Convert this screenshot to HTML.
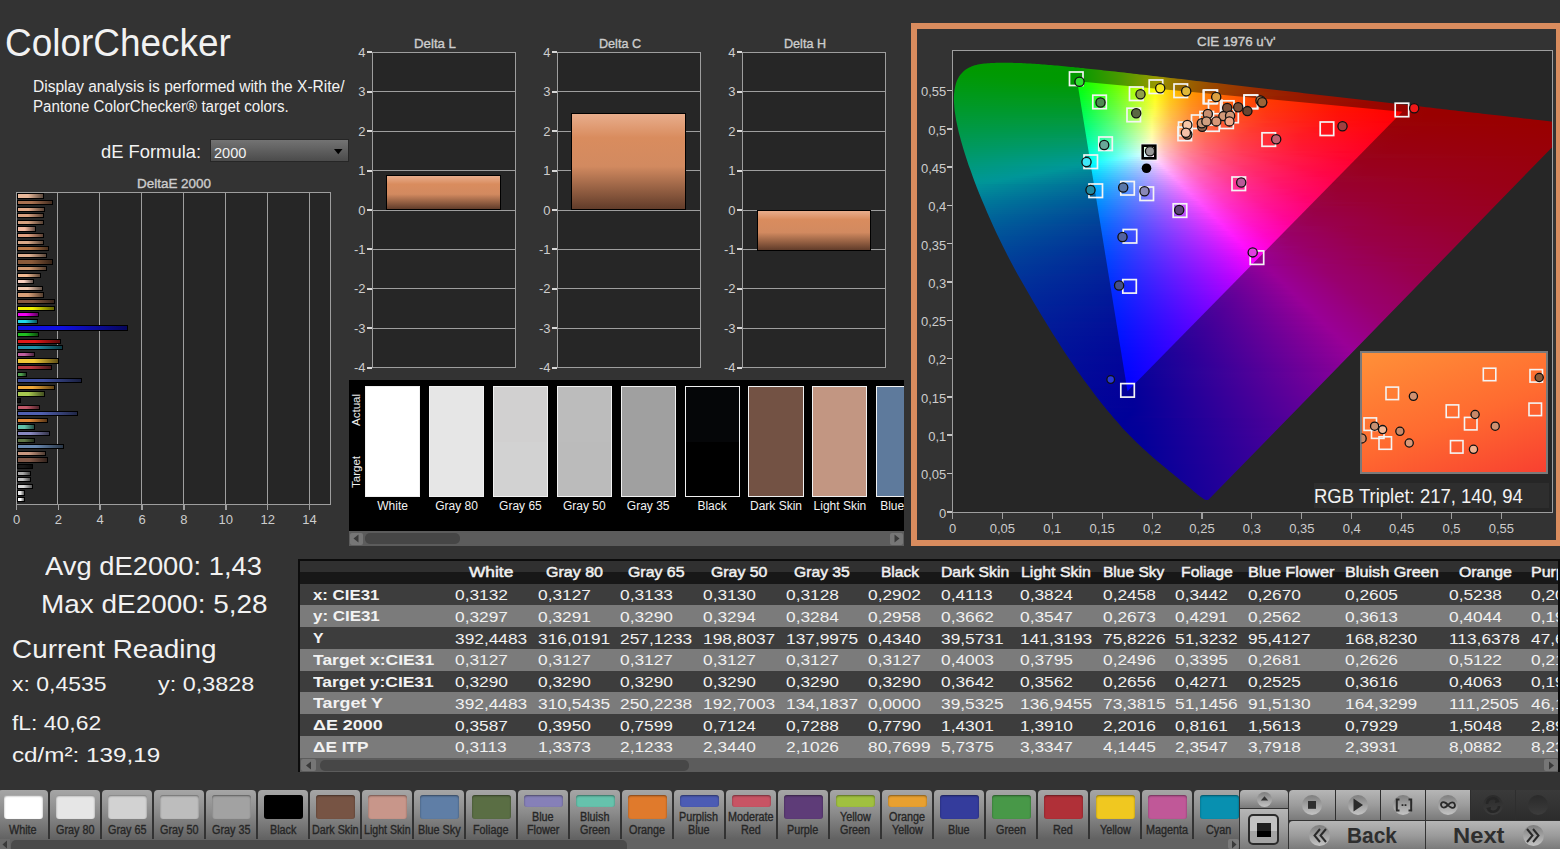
<!DOCTYPE html>
<html><head><meta charset="utf-8"><style>
html,body{margin:0;padding:0;}
body{width:1560px;height:849px;overflow:hidden;background:#333333;position:relative;font-family:"Liberation Sans",sans-serif;}
div,span,svg{position:absolute;}
span{white-space:nowrap;display:block;}
i{position:absolute;left:0;right:0;display:block;}
</style></head><body>
<span style="left:4.50px;top:23.29px;font-size:39px;line-height:39px;color:#f2f2f2;transform:scaleX(0.9476);transform-origin:0 0;">ColorChecker</span>
<span style="left:33.00px;top:79.46px;font-size:16px;line-height:16px;color:#f2f2f2;transform:scaleX(0.9703);transform-origin:0 0;">Display analysis is performed with the X-Rite/</span>
<span style="left:33.00px;top:99.46px;font-size:16px;line-height:16px;color:#f2f2f2;transform:scaleX(0.9454);transform-origin:0 0;">Pantone ColorChecker® target colors.</span>
<span style="left:101.00px;top:141.92px;font-size:19px;line-height:19px;color:#f2f2f2;transform:scaleX(0.9666);transform-origin:0 0;">dE Formula:</span>
<div style="left:209.50px;top:138.50px;width:139.00px;height:23.50px;background:linear-gradient(#737373,#4b4b4b);border:1px solid #262626;box-sizing:border-box;"></div>
<span style="left:213.80px;top:145.00px;font-size:15px;line-height:15px;color:#f2f2f2;transform:scaleX(0.9708);transform-origin:0 0;">2000</span>
<svg style="left:334px;top:149px" width="9" height="6"><path d="M0 0H8.5L4.25 5.2Z" fill="#000"/></svg>
<span style="left:137.00px;top:177.00px;font-size:13px;line-height:13px;color:#cdcdcd;transform:scaleX(1.0340);transform-origin:0 0;-webkit-text-stroke:0.35px #cdcdcd;">DeltaE 2000</span>
<div style="left:16.00px;top:192.00px;width:315.00px;height:313.00px;background:#262626;border:1px solid #9e9e9e;box-sizing:border-box;"></div>
<div style="left:57.36px;top:192.00px;width:1.00px;height:313.00px;background:#9e9e9e;"></div>
<div style="left:99.22px;top:192.00px;width:1.00px;height:313.00px;background:#9e9e9e;"></div>
<div style="left:141.08px;top:192.00px;width:1.00px;height:313.00px;background:#9e9e9e;"></div>
<div style="left:182.94px;top:192.00px;width:1.00px;height:313.00px;background:#9e9e9e;"></div>
<div style="left:224.80px;top:192.00px;width:1.00px;height:313.00px;background:#9e9e9e;"></div>
<div style="left:266.66px;top:192.00px;width:1.00px;height:313.00px;background:#9e9e9e;"></div>
<div style="left:308.52px;top:192.00px;width:1.00px;height:313.00px;background:#9e9e9e;"></div>
<div style="left:15.75px;top:505.00px;width:1.50px;height:5.00px;background:#9e9e9e;"></div>
<span style="left:12.89px;top:513.20px;font-size:13px;line-height:13px;color:#cdcdcd;">0</span>
<div style="left:57.61px;top:505.00px;width:1.50px;height:5.00px;background:#9e9e9e;"></div>
<span style="left:54.75px;top:513.20px;font-size:13px;line-height:13px;color:#cdcdcd;">2</span>
<div style="left:99.47px;top:505.00px;width:1.50px;height:5.00px;background:#9e9e9e;"></div>
<span style="left:96.61px;top:513.20px;font-size:13px;line-height:13px;color:#cdcdcd;">4</span>
<div style="left:141.33px;top:505.00px;width:1.50px;height:5.00px;background:#9e9e9e;"></div>
<span style="left:138.47px;top:513.20px;font-size:13px;line-height:13px;color:#cdcdcd;">6</span>
<div style="left:183.19px;top:505.00px;width:1.50px;height:5.00px;background:#9e9e9e;"></div>
<span style="left:180.33px;top:513.20px;font-size:13px;line-height:13px;color:#cdcdcd;">8</span>
<div style="left:225.05px;top:505.00px;width:1.50px;height:5.00px;background:#9e9e9e;"></div>
<span style="left:218.59px;top:513.20px;font-size:13px;line-height:13px;color:#cdcdcd;">10</span>
<div style="left:266.91px;top:505.00px;width:1.50px;height:5.00px;background:#9e9e9e;"></div>
<span style="left:260.44px;top:513.20px;font-size:13px;line-height:13px;color:#cdcdcd;">12</span>
<div style="left:308.77px;top:505.00px;width:1.50px;height:5.00px;background:#9e9e9e;"></div>
<span style="left:302.31px;top:513.20px;font-size:13px;line-height:13px;color:#cdcdcd;">14</span>
<div style="left:16.50px;top:193.40px;width:27.90px;height:5.20px;background:linear-gradient(90deg,#e8b89a,#e8b89a 40%,#000 140%);border:1px solid #000;box-sizing:border-box;"></div>
<div style="left:16.50px;top:200.00px;width:36.90px;height:5.20px;background:linear-gradient(90deg,#a87050,#a87050 40%,#000 140%);border:1px solid #000;box-sizing:border-box;"></div>
<div style="left:16.50px;top:206.60px;width:28.90px;height:5.20px;background:linear-gradient(90deg,#e0a888,#e0a888 40%,#000 140%);border:1px solid #000;box-sizing:border-box;"></div>
<div style="left:16.50px;top:213.20px;width:27.00px;height:5.20px;background:linear-gradient(90deg,#d8a080,#d8a080 40%,#000 140%);border:1px solid #000;box-sizing:border-box;"></div>
<div style="left:16.50px;top:219.80px;width:27.90px;height:5.20px;background:linear-gradient(90deg,#d4a080,#d4a080 40%,#000 140%);border:1px solid #000;box-sizing:border-box;"></div>
<div style="left:16.50px;top:226.40px;width:19.90px;height:5.20px;background:linear-gradient(90deg,#f0b8a0,#f0b8a0 40%,#000 140%);border:1px solid #000;box-sizing:border-box;"></div>
<div style="left:16.50px;top:233.00px;width:27.00px;height:5.20px;background:linear-gradient(90deg,#e0a080,#e0a080 40%,#000 140%);border:1px solid #000;box-sizing:border-box;"></div>
<div style="left:16.50px;top:239.60px;width:27.90px;height:5.20px;background:linear-gradient(90deg,#d8a888,#d8a888 40%,#000 140%);border:1px solid #000;box-sizing:border-box;"></div>
<div style="left:16.50px;top:246.20px;width:32.60px;height:5.20px;background:linear-gradient(90deg,#b87848,#b87848 40%,#000 140%);border:1px solid #000;box-sizing:border-box;"></div>
<div style="left:16.50px;top:252.80px;width:30.80px;height:5.20px;background:linear-gradient(90deg,#e0b090,#e0b090 40%,#000 140%);border:1px solid #000;box-sizing:border-box;"></div>
<div style="left:16.50px;top:259.40px;width:36.90px;height:5.20px;background:linear-gradient(90deg,#8a5a3a,#8a5a3a 40%,#000 140%);border:1px solid #000;box-sizing:border-box;"></div>
<div style="left:16.50px;top:266.00px;width:30.70px;height:5.20px;background:linear-gradient(90deg,#d09870,#d09870 40%,#000 140%);border:1px solid #000;box-sizing:border-box;"></div>
<div style="left:16.50px;top:272.60px;width:24.60px;height:5.20px;background:linear-gradient(90deg,#f0b890,#f0b890 40%,#000 140%);border:1px solid #000;box-sizing:border-box;"></div>
<div style="left:16.50px;top:279.20px;width:17.40px;height:5.20px;background:linear-gradient(90deg,#f8d0c0,#f8d0c0 40%,#000 140%);border:1px solid #000;box-sizing:border-box;"></div>
<div style="left:16.50px;top:285.80px;width:26.50px;height:5.20px;background:linear-gradient(90deg,#f0c8b0,#f0c8b0 40%,#000 140%);border:1px solid #000;box-sizing:border-box;"></div>
<div style="left:16.50px;top:292.40px;width:27.90px;height:5.20px;background:linear-gradient(90deg,#d8a078,#d8a078 40%,#000 140%);border:1px solid #000;box-sizing:border-box;"></div>
<div style="left:16.50px;top:299.00px;width:38.00px;height:5.20px;background:linear-gradient(90deg,#8a5a40,#8a5a40 40%,#000 140%);border:1px solid #000;box-sizing:border-box;"></div>
<div style="left:16.50px;top:305.60px;width:38.70px;height:5.20px;background:linear-gradient(90deg,#f0f000,#f0f000 40%,#000 140%);border:1px solid #000;box-sizing:border-box;"></div>
<div style="left:16.50px;top:312.20px;width:22.70px;height:5.20px;background:linear-gradient(90deg,#f000f0,#f000f0 40%,#000 140%);border:1px solid #000;box-sizing:border-box;"></div>
<div style="left:16.50px;top:318.80px;width:21.80px;height:5.20px;background:linear-gradient(90deg,#20d8e8,#20d8e8 40%,#000 140%);border:1px solid #000;box-sizing:border-box;"></div>
<div style="left:16.50px;top:325.40px;width:111.00px;height:5.20px;background:linear-gradient(90deg,#1010e0,#1010e0 40%,#000 140%);border:1px solid #000;box-sizing:border-box;"></div>
<div style="left:16.50px;top:332.00px;width:22.70px;height:5.20px;background:linear-gradient(90deg,#20c020,#20c020 40%,#000 140%);border:1px solid #000;box-sizing:border-box;"></div>
<div style="left:16.50px;top:338.60px;width:44.70px;height:5.20px;background:linear-gradient(90deg,#e01818,#e01818 40%,#000 140%);border:1px solid #000;box-sizing:border-box;"></div>
<div style="left:16.50px;top:345.20px;width:46.00px;height:5.20px;background:linear-gradient(90deg,#2090a8,#2090a8 40%,#000 140%);border:1px solid #000;box-sizing:border-box;"></div>
<div style="left:16.50px;top:351.80px;width:18.00px;height:5.20px;background:linear-gradient(90deg,#c060a0,#c060a0 40%,#000 140%);border:1px solid #000;box-sizing:border-box;"></div>
<div style="left:16.50px;top:358.40px;width:42.20px;height:5.20px;background:linear-gradient(90deg,#f0c838,#f0c838 40%,#000 140%);border:1px solid #000;box-sizing:border-box;"></div>
<div style="left:16.50px;top:365.00px;width:35.90px;height:5.20px;background:linear-gradient(90deg,#b83840,#b83840 40%,#000 140%);border:1px solid #000;box-sizing:border-box;"></div>
<div style="left:16.50px;top:371.60px;width:10.20px;height:5.20px;background:linear-gradient(90deg,#50a050,#50a050 40%,#000 140%);border:1px solid #000;box-sizing:border-box;"></div>
<div style="left:16.50px;top:378.20px;width:65.00px;height:5.20px;background:linear-gradient(90deg,#4050a0,#4050a0 40%,#000 140%);border:1px solid #000;box-sizing:border-box;"></div>
<div style="left:16.50px;top:384.80px;width:38.20px;height:5.20px;background:linear-gradient(90deg,#f0a838,#f0a838 40%,#000 140%);border:1px solid #000;box-sizing:border-box;"></div>
<div style="left:16.50px;top:391.40px;width:28.10px;height:5.20px;background:linear-gradient(90deg,#a8c850,#a8c850 40%,#000 140%);border:1px solid #000;box-sizing:border-box;"></div>
<div style="left:16.50px;top:398.00px;width:4.20px;height:5.20px;background:linear-gradient(90deg,#101010,#101010 40%,#000 140%);border:1px solid #000;box-sizing:border-box;"></div>
<div style="left:16.50px;top:404.60px;width:23.00px;height:5.20px;background:linear-gradient(90deg,#c05868,#c05868 40%,#000 140%);border:1px solid #000;box-sizing:border-box;"></div>
<div style="left:16.50px;top:411.20px;width:61.20px;height:5.20px;background:linear-gradient(90deg,#5060b0,#5060b0 40%,#000 140%);border:1px solid #000;box-sizing:border-box;"></div>
<div style="left:16.50px;top:417.80px;width:31.90px;height:5.20px;background:linear-gradient(90deg,#e08838,#e08838 40%,#000 140%);border:1px solid #000;box-sizing:border-box;"></div>
<div style="left:16.50px;top:424.40px;width:18.00px;height:5.20px;background:linear-gradient(90deg,#60c0a8,#60c0a8 40%,#000 140%);border:1px solid #000;box-sizing:border-box;"></div>
<div style="left:16.50px;top:431.00px;width:33.00px;height:5.20px;background:linear-gradient(90deg,#8888c0,#8888c0 40%,#000 140%);border:1px solid #000;box-sizing:border-box;"></div>
<div style="left:16.50px;top:437.60px;width:18.00px;height:5.20px;background:linear-gradient(90deg,#607848,#607848 40%,#000 140%);border:1px solid #000;box-sizing:border-box;"></div>
<div style="left:16.50px;top:444.20px;width:47.10px;height:5.20px;background:linear-gradient(90deg,#6888b0,#6888b0 40%,#000 140%);border:1px solid #000;box-sizing:border-box;"></div>
<div style="left:16.50px;top:450.80px;width:29.20px;height:5.20px;background:linear-gradient(90deg,#c89880,#c89880 40%,#000 140%);border:1px solid #000;box-sizing:border-box;"></div>
<div style="left:16.50px;top:457.40px;width:31.00px;height:5.20px;background:linear-gradient(90deg,#805848,#805848 40%,#000 140%);border:1px solid #000;box-sizing:border-box;"></div>
<div style="left:16.50px;top:464.00px;width:16.30px;height:5.20px;background:linear-gradient(90deg,#181818,#181818 40%,#000 140%);border:1px solid #000;box-sizing:border-box;"></div>
<div style="left:16.50px;top:470.60px;width:14.90px;height:5.20px;background:linear-gradient(90deg,#a8a8a8,#a8a8a8 40%,#000 140%);border:1px solid #000;box-sizing:border-box;"></div>
<div style="left:16.50px;top:477.20px;width:14.90px;height:5.20px;background:linear-gradient(90deg,#c0c0c0,#c0c0c0 40%,#000 140%);border:1px solid #000;box-sizing:border-box;"></div>
<div style="left:16.50px;top:483.80px;width:16.30px;height:5.20px;background:linear-gradient(90deg,#d8d8d8,#d8d8d8 40%,#000 140%);border:1px solid #000;box-sizing:border-box;"></div>
<div style="left:16.50px;top:490.40px;width:8.70px;height:5.20px;background:linear-gradient(90deg,#e8e8e8,#e8e8e8 40%,#000 140%);border:1px solid #000;box-sizing:border-box;"></div>
<div style="left:16.50px;top:497.00px;width:8.00px;height:5.20px;background:linear-gradient(90deg,#ffffff,#ffffff 40%,#000 140%);border:1px solid #000;box-sizing:border-box;"></div>
<div style="left:372.00px;top:51.70px;width:144.00px;height:316.30px;background:#262626;border:1px solid #9e9e9e;box-sizing:border-box;"></div>
<div style="left:372.00px;top:327.82px;width:144.00px;height:1.00px;background:#9e9e9e;"></div>
<div style="left:372.00px;top:288.38px;width:144.00px;height:1.00px;background:#9e9e9e;"></div>
<div style="left:372.00px;top:248.94px;width:144.00px;height:1.00px;background:#9e9e9e;"></div>
<div style="left:372.00px;top:209.50px;width:144.00px;height:1.00px;background:#9e9e9e;"></div>
<div style="left:372.00px;top:170.06px;width:144.00px;height:1.00px;background:#9e9e9e;"></div>
<div style="left:372.00px;top:130.62px;width:144.00px;height:1.00px;background:#9e9e9e;"></div>
<div style="left:372.00px;top:91.18px;width:144.00px;height:1.00px;background:#9e9e9e;"></div>
<div style="left:366.50px;top:366.76px;width:5.50px;height:2.00px;background:#d8d8d8;"></div>
<span style="left:353.93px;top:361.36px;font-size:13px;line-height:13px;color:#cdcdcd;">-4</span>
<div style="left:366.50px;top:327.32px;width:5.50px;height:2.00px;background:#d8d8d8;"></div>
<span style="left:353.93px;top:321.92px;font-size:13px;line-height:13px;color:#cdcdcd;">-3</span>
<div style="left:366.50px;top:287.88px;width:5.50px;height:2.00px;background:#d8d8d8;"></div>
<span style="left:353.93px;top:282.48px;font-size:13px;line-height:13px;color:#cdcdcd;">-2</span>
<div style="left:366.50px;top:248.44px;width:5.50px;height:2.00px;background:#d8d8d8;"></div>
<span style="left:353.93px;top:243.04px;font-size:13px;line-height:13px;color:#cdcdcd;">-1</span>
<div style="left:366.50px;top:209.00px;width:5.50px;height:2.00px;background:#d8d8d8;"></div>
<span style="left:358.29px;top:203.60px;font-size:13px;line-height:13px;color:#cdcdcd;">0</span>
<div style="left:366.50px;top:169.56px;width:5.50px;height:2.00px;background:#d8d8d8;"></div>
<span style="left:358.29px;top:164.16px;font-size:13px;line-height:13px;color:#cdcdcd;">1</span>
<div style="left:366.50px;top:130.12px;width:5.50px;height:2.00px;background:#d8d8d8;"></div>
<span style="left:358.29px;top:124.72px;font-size:13px;line-height:13px;color:#cdcdcd;">2</span>
<div style="left:366.50px;top:90.68px;width:5.50px;height:2.00px;background:#d8d8d8;"></div>
<span style="left:358.29px;top:85.28px;font-size:13px;line-height:13px;color:#cdcdcd;">3</span>
<div style="left:366.50px;top:51.24px;width:5.50px;height:2.00px;background:#d8d8d8;"></div>
<span style="left:358.29px;top:45.84px;font-size:13px;line-height:13px;color:#cdcdcd;">4</span>
<span style="left:414.00px;top:37.00px;font-size:13px;line-height:13px;color:#cdcdcd;transform:scaleX(1.0192);transform-origin:0 0;-webkit-text-stroke:0.35px #cdcdcd;">Delta L</span>
<div style="left:386.00px;top:174.50px;width:114.50px;height:35.50px;background:linear-gradient(#e8ad8c,#d98c5e 25%,#d28a60 55%,#613c2a);border:1px solid #000;box-sizing:border-box;"></div>
<div style="left:557.00px;top:51.70px;width:144.00px;height:316.30px;background:#262626;border:1px solid #9e9e9e;box-sizing:border-box;"></div>
<div style="left:557.00px;top:327.82px;width:144.00px;height:1.00px;background:#9e9e9e;"></div>
<div style="left:557.00px;top:288.38px;width:144.00px;height:1.00px;background:#9e9e9e;"></div>
<div style="left:557.00px;top:248.94px;width:144.00px;height:1.00px;background:#9e9e9e;"></div>
<div style="left:557.00px;top:209.50px;width:144.00px;height:1.00px;background:#9e9e9e;"></div>
<div style="left:557.00px;top:170.06px;width:144.00px;height:1.00px;background:#9e9e9e;"></div>
<div style="left:557.00px;top:130.62px;width:144.00px;height:1.00px;background:#9e9e9e;"></div>
<div style="left:557.00px;top:91.18px;width:144.00px;height:1.00px;background:#9e9e9e;"></div>
<div style="left:551.50px;top:366.76px;width:5.50px;height:2.00px;background:#d8d8d8;"></div>
<span style="left:538.93px;top:361.36px;font-size:13px;line-height:13px;color:#cdcdcd;">-4</span>
<div style="left:551.50px;top:327.32px;width:5.50px;height:2.00px;background:#d8d8d8;"></div>
<span style="left:538.93px;top:321.92px;font-size:13px;line-height:13px;color:#cdcdcd;">-3</span>
<div style="left:551.50px;top:287.88px;width:5.50px;height:2.00px;background:#d8d8d8;"></div>
<span style="left:538.93px;top:282.48px;font-size:13px;line-height:13px;color:#cdcdcd;">-2</span>
<div style="left:551.50px;top:248.44px;width:5.50px;height:2.00px;background:#d8d8d8;"></div>
<span style="left:538.93px;top:243.04px;font-size:13px;line-height:13px;color:#cdcdcd;">-1</span>
<div style="left:551.50px;top:209.00px;width:5.50px;height:2.00px;background:#d8d8d8;"></div>
<span style="left:543.28px;top:203.60px;font-size:13px;line-height:13px;color:#cdcdcd;">0</span>
<div style="left:551.50px;top:169.56px;width:5.50px;height:2.00px;background:#d8d8d8;"></div>
<span style="left:543.28px;top:164.16px;font-size:13px;line-height:13px;color:#cdcdcd;">1</span>
<div style="left:551.50px;top:130.12px;width:5.50px;height:2.00px;background:#d8d8d8;"></div>
<span style="left:543.28px;top:124.72px;font-size:13px;line-height:13px;color:#cdcdcd;">2</span>
<div style="left:551.50px;top:90.68px;width:5.50px;height:2.00px;background:#d8d8d8;"></div>
<span style="left:543.28px;top:85.28px;font-size:13px;line-height:13px;color:#cdcdcd;">3</span>
<div style="left:551.50px;top:51.24px;width:5.50px;height:2.00px;background:#d8d8d8;"></div>
<span style="left:543.28px;top:45.84px;font-size:13px;line-height:13px;color:#cdcdcd;">4</span>
<span style="left:599.20px;top:37.00px;font-size:13px;line-height:13px;color:#cdcdcd;transform:scaleX(0.9687);transform-origin:0 0;-webkit-text-stroke:0.35px #cdcdcd;">Delta C</span>
<div style="left:571.00px;top:113.37px;width:115.00px;height:96.63px;background:linear-gradient(#e8ad8c,#d98c5e 25%,#d28a60 55%,#613c2a);border:1px solid #000;box-sizing:border-box;"></div>
<div style="left:742.00px;top:51.70px;width:144.00px;height:316.30px;background:#262626;border:1px solid #9e9e9e;box-sizing:border-box;"></div>
<div style="left:742.00px;top:327.82px;width:144.00px;height:1.00px;background:#9e9e9e;"></div>
<div style="left:742.00px;top:288.38px;width:144.00px;height:1.00px;background:#9e9e9e;"></div>
<div style="left:742.00px;top:248.94px;width:144.00px;height:1.00px;background:#9e9e9e;"></div>
<div style="left:742.00px;top:209.50px;width:144.00px;height:1.00px;background:#9e9e9e;"></div>
<div style="left:742.00px;top:170.06px;width:144.00px;height:1.00px;background:#9e9e9e;"></div>
<div style="left:742.00px;top:130.62px;width:144.00px;height:1.00px;background:#9e9e9e;"></div>
<div style="left:742.00px;top:91.18px;width:144.00px;height:1.00px;background:#9e9e9e;"></div>
<div style="left:736.50px;top:366.76px;width:5.50px;height:2.00px;background:#d8d8d8;"></div>
<span style="left:723.93px;top:361.36px;font-size:13px;line-height:13px;color:#cdcdcd;">-4</span>
<div style="left:736.50px;top:327.32px;width:5.50px;height:2.00px;background:#d8d8d8;"></div>
<span style="left:723.93px;top:321.92px;font-size:13px;line-height:13px;color:#cdcdcd;">-3</span>
<div style="left:736.50px;top:287.88px;width:5.50px;height:2.00px;background:#d8d8d8;"></div>
<span style="left:723.93px;top:282.48px;font-size:13px;line-height:13px;color:#cdcdcd;">-2</span>
<div style="left:736.50px;top:248.44px;width:5.50px;height:2.00px;background:#d8d8d8;"></div>
<span style="left:723.93px;top:243.04px;font-size:13px;line-height:13px;color:#cdcdcd;">-1</span>
<div style="left:736.50px;top:209.00px;width:5.50px;height:2.00px;background:#d8d8d8;"></div>
<span style="left:728.28px;top:203.60px;font-size:13px;line-height:13px;color:#cdcdcd;">0</span>
<div style="left:736.50px;top:169.56px;width:5.50px;height:2.00px;background:#d8d8d8;"></div>
<span style="left:728.28px;top:164.16px;font-size:13px;line-height:13px;color:#cdcdcd;">1</span>
<div style="left:736.50px;top:130.12px;width:5.50px;height:2.00px;background:#d8d8d8;"></div>
<span style="left:728.28px;top:124.72px;font-size:13px;line-height:13px;color:#cdcdcd;">2</span>
<div style="left:736.50px;top:90.68px;width:5.50px;height:2.00px;background:#d8d8d8;"></div>
<span style="left:728.28px;top:85.28px;font-size:13px;line-height:13px;color:#cdcdcd;">3</span>
<div style="left:736.50px;top:51.24px;width:5.50px;height:2.00px;background:#d8d8d8;"></div>
<span style="left:728.28px;top:45.84px;font-size:13px;line-height:13px;color:#cdcdcd;">4</span>
<span style="left:784.40px;top:37.00px;font-size:13px;line-height:13px;color:#cdcdcd;transform:scaleX(0.9687);transform-origin:0 0;-webkit-text-stroke:0.35px #cdcdcd;">Delta H</span>
<div style="left:756.50px;top:210.00px;width:114.00px;height:41.41px;background:linear-gradient(#e8ad8c,#d98c5e 22%,#d28a60 55%,#613c2a);border:1px solid #000;box-sizing:border-box;"></div>
<div style="left:349.00px;top:380.00px;width:555.00px;height:151.00px;background:#000;"></div>
<div style="left:365.00px;top:386.00px;width:55.20px;height:111.00px;background:linear-gradient(#ffffff 50%,#ffffff 50%);border:1px solid #f0f0f0;box-sizing:border-box;"></div>
<span style="left:377.27px;top:499.84px;font-size:12px;line-height:12px;color:#f2f2f2;">White</span>
<div style="left:428.90px;top:386.00px;width:55.20px;height:111.00px;background:linear-gradient(#e6e6e6 50%,#e6e6e6 50%);border:1px solid #f0f0f0;box-sizing:border-box;"></div>
<span style="left:435.17px;top:499.84px;font-size:12px;line-height:12px;color:#f2f2f2;">Gray 80</span>
<div style="left:492.80px;top:386.00px;width:55.20px;height:111.00px;background:linear-gradient(#d1d0d0 50%,#d2d2d2 50%);border:1px solid #f0f0f0;box-sizing:border-box;"></div>
<span style="left:499.07px;top:499.84px;font-size:12px;line-height:12px;color:#f2f2f2;">Gray 65</span>
<div style="left:556.70px;top:386.00px;width:55.20px;height:111.00px;background:linear-gradient(#bcbcbc 50%,#bbbbbb 50%);border:1px solid #f0f0f0;box-sizing:border-box;"></div>
<span style="left:562.97px;top:499.84px;font-size:12px;line-height:12px;color:#f2f2f2;">Gray 50</span>
<div style="left:620.60px;top:386.00px;width:55.20px;height:111.00px;background:linear-gradient(#a0a0a0 50%,#a0a0a0 50%);border:1px solid #f0f0f0;box-sizing:border-box;"></div>
<span style="left:626.87px;top:499.84px;font-size:12px;line-height:12px;color:#f2f2f2;">Gray 35</span>
<div style="left:684.50px;top:386.00px;width:55.20px;height:111.00px;background:linear-gradient(#050608 50%,#000000 50%);border:1px solid #f0f0f0;box-sizing:border-box;"></div>
<span style="left:697.40px;top:499.84px;font-size:12px;line-height:12px;color:#f2f2f2;">Black</span>
<div style="left:748.40px;top:386.00px;width:55.20px;height:111.00px;background:linear-gradient(#735244 50%,#735244 50%);border:1px solid #f0f0f0;box-sizing:border-box;"></div>
<span style="left:749.99px;top:499.84px;font-size:12px;line-height:12px;color:#f2f2f2;">Dark Skin</span>
<div style="left:812.30px;top:386.00px;width:55.20px;height:111.00px;background:linear-gradient(#c29682 50%,#c29682 50%);border:1px solid #f0f0f0;box-sizing:border-box;"></div>
<span style="left:813.56px;top:499.84px;font-size:12px;line-height:12px;color:#f2f2f2;">Light Skin</span>
<div style="left:876.20px;top:386.00px;width:27.80px;height:111.00px;background:linear-gradient(#5e7a9c 50%,#5e7a9c 50%);border:1px solid #f0f0f0;border-right:none;box-sizing:border-box;"></div>
<span style="left:880.20px;top:499.84px;font-size:12px;line-height:12px;color:#f2f2f2;">Blue</span>
<span style="left:340.21px;top:404.30px;font-size:11.5px;line-height:12px;color:#f0f0f0;transform:rotate(-90deg) scaleX(1.007);transform-origin:15.98px 6px;">Actual</span>
<span style="left:340.21px;top:466.30px;font-size:11.5px;line-height:12px;color:#f0f0f0;transform:rotate(-90deg) scaleX(1.001);transform-origin:15.98px 6px;">Target</span>
<div style="left:349.00px;top:531.00px;width:555.00px;height:14.50px;background:#5c5c5c;"></div>
<div style="left:350.00px;top:532.50px;width:13.00px;height:12.00px;background:#767676;border-radius:2px;"></div>
<svg style="left:352px;top:534px" width="8" height="9"><path d="M6.5 0.5V8.5L1.5 4.5Z" fill="#3a3a3a"/></svg>
<div style="left:365.00px;top:533.00px;width:95.00px;height:11.00px;background:#464646;border-radius:5px;"></div>
<div style="left:890.00px;top:532.50px;width:13.00px;height:12.00px;background:#767676;border-radius:2px;"></div>
<svg style="left:893px;top:534px" width="8" height="9"><path d="M1.5 0.5V8.5L6.5 4.5Z" fill="#3a3a3a"/></svg>
<span style="left:45.30px;top:553.19px;font-size:26px;line-height:26px;color:#f2f2f2;transform:scaleX(1.0518);transform-origin:0 0;">Avg dE2000: 1,43</span>
<span style="left:41.20px;top:591.19px;font-size:26px;line-height:26px;color:#f2f2f2;transform:scaleX(1.0740);transform-origin:0 0;">Max dE2000: 5,28</span>
<span style="left:11.70px;top:637.24px;font-size:25px;line-height:25px;color:#f2f2f2;transform:scaleX(1.1150);transform-origin:0 0;">Current Reading</span>
<span style="left:11.70px;top:672.62px;font-size:21px;line-height:21px;color:#f2f2f2;transform:scaleX(1.0936);transform-origin:0 0;">x: 0,4535</span>
<span style="left:158.00px;top:672.62px;font-size:21px;line-height:21px;color:#f2f2f2;transform:scaleX(1.1132);transform-origin:0 0;">y: 0,3828</span>
<span style="left:11.70px;top:711.92px;font-size:21px;line-height:21px;color:#f2f2f2;transform:scaleX(1.0907);transform-origin:0 0;">fL: 40,62</span>
<span style="left:11.70px;top:744.42px;font-size:21px;line-height:21px;color:#f2f2f2;transform:scaleX(1.1541);transform-origin:0 0;">cd/m²: 139,19</span>
<div style="left:911.00px;top:23.00px;width:649.00px;height:523.00px;border:6px solid #d98c5e;border-right:none;box-sizing:border-box;"></div>
<div style="left:1555.50px;top:23.00px;width:4.50px;height:523.00px;background:#d98c5e;"></div>
<span style="left:1196.95px;top:35.25px;font-size:13px;line-height:13px;color:#cdcdcd;transform:scaleX(1.0261);transform-origin:0 0;-webkit-text-stroke:0.35px #cdcdcd;">CIE 1976 u'v'</span>
<div style="left:952.00px;top:50.00px;width:601.00px;height:463.00px;background:#262626;border:1px solid #9e9e9e;box-sizing:border-box;"></div>
<div style="left:953px;top:62px;width:599px;height:450px;overflow:hidden;clip-path:polygon(249.3px 444.1px,236.5px 457.3px,230.7px 463.2px,232.1px 461.8px,236.3px 457.4px,243.4px 450.1px,249.1px 444.3px,253.3px 439.9px,255.4px 437.8px,255.3px 437.8px,255.2px 437.8px,255.1px 437.9px,255.0px 437.9px,255.0px 437.9px,254.9px 438.0px,254.7px 438.0px,254.6px 438.0px,254.5px 438.0px,254.4px 438.0px,254.3px 438.1px,254.1px 438.1px,254.0px 438.1px,253.8px 438.0px,253.6px 438.0px,253.4px 438.0px,253.2px 438.0px,253.0px 437.9px,252.8px 437.9px,252.5px 437.9px,252.2px 437.8px,251.9px 437.6px,251.4px 437.4px,250.9px 437.1px,250.4px 436.7px,249.7px 436.3px,249.1px 435.8px,248.3px 435.3px,247.5px 434.7px,246.6px 434.0px,245.6px 433.3px,244.5px 432.4px,243.2px 431.3px,241.8px 430.2px,240.3px 428.9px,238.8px 427.6px,237.2px 426.3px,235.8px 425.1px,234.4px 424.0px,233.2px 422.9px,232.1px 422.0px,231.1px 421.2px,230.1px 420.4px,229.2px 419.6px,228.2px 418.9px,227.3px 418.0px,226.2px 417.2px,225.1px 416.2px,223.9px 415.3px,222.6px 414.2px,221.3px 413.2px,220.0px 412.1px,218.7px 411.0px,217.3px 409.9px,215.8px 408.7px,214.4px 407.5px,212.9px 406.3px,211.4px 405.0px,209.9px 403.8px,208.3px 402.5px,206.7px 401.1px,205.0px 399.7px,203.3px 398.2px,201.5px 396.7px,199.7px 395.2px,197.9px 393.5px,196.0px 391.9px,194.0px 390.1px,192.0px 388.3px,190.0px 386.4px,187.9px 384.5px,185.8px 382.4px,183.6px 380.4px,181.4px 378.2px,179.2px 376.0px,176.9px 373.7px,174.5px 371.3px,172.0px 368.7px,169.4px 365.9px,166.7px 362.8px,163.9px 359.6px,160.9px 356.2px,157.9px 352.6px,154.8px 348.9px,151.6px 345.0px,148.3px 340.9px,145.0px 336.7px,141.5px 332.2px,138.1px 327.6px,134.5px 322.8px,130.9px 317.9px,127.2px 312.8px,123.4px 307.5px,119.7px 302.0px,115.9px 296.4px,112.0px 290.7px,108.1px 284.7px,104.2px 278.6px,100.1px 272.2px,96.1px 265.8px,92.1px 259.3px,88.1px 252.7px,84.1px 246.1px,80.2px 239.4px,76.2px 232.6px,72.3px 225.8px,68.3px 218.8px,64.4px 211.9px,60.6px 204.9px,56.9px 198.0px,53.3px 191.1px,49.9px 184.3px,46.6px 177.5px,43.3px 170.8px,40.2px 164.0px,37.2px 157.3px,34.3px 150.7px,31.6px 144.3px,28.9px 138.0px,26.4px 131.9px,24.0px 125.9px,21.7px 120.0px,19.6px 114.2px,17.6px 108.6px,15.6px 103.2px,13.9px 97.9px,12.2px 92.8px,10.7px 88.0px,9.3px 83.3px,8.0px 78.8px,6.9px 74.5px,5.8px 70.4px,4.9px 66.5px,4.1px 62.7px,3.3px 59.0px,2.7px 55.5px,2.2px 52.2px,1.7px 49.1px,1.4px 46.1px,1.2px 43.2px,1.0px 40.5px,0.9px 37.9px,0.9px 35.4px,1.0px 33.0px,1.2px 30.7px,1.4px 28.5px,1.8px 26.4px,2.2px 24.5px,2.7px 22.6px,3.2px 20.8px,3.8px 19.1px,4.5px 17.5px,5.3px 16.0px,6.1px 14.6px,7.0px 13.3px,8.0px 12.0px,9.0px 10.9px,10.1px 9.8px,11.2px 8.7px,12.4px 7.8px,13.6px 7.0px,14.9px 6.2px,16.2px 5.5px,17.5px 4.9px,18.9px 4.3px,20.4px 3.8px,21.8px 3.3px,23.3px 2.9px,24.9px 2.6px,26.4px 2.3px,28.0px 2.0px,29.6px 1.8px,31.3px 1.6px,32.9px 1.4px,34.6px 1.3px,36.3px 1.2px,38.0px 1.0px,39.7px 0.9px,41.5px 0.9px,43.2px 0.8px,45.0px 0.8px,46.8px 0.8px,48.6px 0.8px,50.3px 0.7px,52.1px 0.7px,53.9px 0.7px,55.6px 0.8px,57.4px 0.8px,59.2px 0.8px,61.0px 0.9px,62.8px 0.9px,64.6px 1.0px,66.4px 1.0px,68.3px 1.1px,70.1px 1.2px,72.0px 1.3px,73.8px 1.4px,75.7px 1.5px,77.6px 1.6px,79.5px 1.7px,81.5px 1.8px,83.4px 1.9px,85.4px 2.1px,87.4px 2.2px,89.4px 2.4px,91.5px 2.5px,93.5px 2.7px,95.6px 2.9px,97.7px 3.0px,99.9px 3.2px,102.0px 3.4px,104.2px 3.6px,106.4px 3.8px,108.6px 4.0px,110.9px 4.2px,113.1px 4.4px,115.4px 4.7px,117.8px 4.9px,120.1px 5.1px,122.5px 5.4px,124.9px 5.6px,127.4px 5.9px,129.9px 6.1px,132.4px 6.4px,134.9px 6.7px,137.5px 6.9px,140.1px 7.2px,142.8px 7.5px,145.4px 7.8px,148.2px 8.1px,150.9px 8.4px,153.7px 8.7px,156.5px 9.0px,159.4px 9.3px,162.3px 9.6px,165.2px 10.0px,168.2px 10.3px,171.2px 10.6px,174.2px 11.0px,177.3px 11.3px,180.4px 11.7px,183.6px 12.0px,186.8px 12.4px,190.0px 12.7px,193.3px 13.1px,196.6px 13.5px,200.0px 13.9px,203.4px 14.3px,206.9px 14.7px,210.3px 15.1px,213.9px 15.5px,217.4px 15.9px,221.0px 16.3px,224.7px 16.7px,228.4px 17.1px,232.1px 17.5px,235.9px 18.0px,239.7px 18.4px,243.5px 18.9px,247.4px 19.3px,251.3px 19.8px,255.3px 20.2px,259.3px 20.7px,263.4px 21.1px,267.4px 21.6px,271.6px 22.1px,275.7px 22.6px,279.9px 23.0px,284.2px 23.5px,288.4px 24.0px,292.7px 24.5px,297.0px 25.0px,301.4px 25.5px,305.8px 26.0px,310.2px 26.5px,314.7px 27.0px,319.1px 27.5px,323.6px 28.0px,328.1px 28.6px,332.6px 29.1px,337.2px 29.6px,341.7px 30.1px,346.3px 30.6px,350.9px 31.2px,355.5px 31.7px,360.0px 32.2px,364.6px 32.8px,369.1px 33.3px,373.5px 33.8px,378.0px 34.3px,382.4px 34.8px,386.8px 35.3px,391.2px 35.8px,395.6px 36.3px,400.0px 36.8px,404.4px 37.3px,408.7px 37.8px,413.1px 38.3px,417.4px 38.8px,421.8px 39.3px,426.1px 39.8px,430.3px 40.3px,434.5px 40.8px,438.6px 41.2px,442.6px 41.7px,446.6px 42.2px,450.6px 42.6px,454.5px 43.1px,458.3px 43.5px,462.1px 43.9px,465.9px 44.3px,469.5px 44.8px,473.2px 45.2px,476.7px 45.6px,480.2px 46.0px,483.7px 46.4px,487.1px 46.8px,490.4px 47.2px,493.6px 47.5px,496.7px 47.9px,499.7px 48.2px,502.5px 48.6px,505.1px 48.9px,507.9px 49.2px,510.7px 49.5px,513.7px 49.9px,517.1px 50.2px,520.8px 50.7px,525.0px 51.1px,529.5px 51.7px,534.2px 52.2px,539.0px 52.8px,543.8px 53.3px,548.4px 53.8px,552.7px 54.3px,556.8px 54.8px,560.5px 55.2px,564.1px 55.6px,567.6px 56.0px,570.9px 56.4px,574.0px 56.8px,577.1px 57.1px,579.9px 57.5px,582.7px 57.8px,585.2px 58.1px,587.7px 58.3px,589.9px 58.6px,592.1px 58.8px,594.1px 59.1px,596.1px 59.3px,597.9px 59.5px,599.6px 59.7px,601.1px 59.9px,602.6px 60.0px,603.9px 60.2px,605.1px 60.3px,606.2px 60.5px,607.4px 60.6px,608.6px 60.7px,609.8px 60.9px,611.0px 61.0px,612.2px 61.1px,613.5px 61.3px,614.6px 61.4px,615.8px 61.6px,616.8px 61.7px,617.7px 61.8px,620.6px 59.7px,625.6px 55.3px,631.9px 49.5px,639.5px 42.3px,644.2px 37.9px,646.0px 36.5px,640.6px 42.4px,628.0px 55.6px,530.2px 156.0px,347.3px 343.7px);"><i style="top:0px;height:2px;background:linear-gradient(90deg,#009900 0px,#029900 123px,#519900 171px,#969900 204px,#996f00 228px,#994800 264px,#992700 321px,#990b00 423px,#990000 525px,#990000 599px)"></i><i style="top:2px;height:2px;background:linear-gradient(90deg,#009900 0px,#029900 123px,#519900 171px,#969900 204px,#996700 234px,#994100 273px,#992000 339px,#990500 459px,#990000 558px,#990000 599px)"></i><i style="top:4px;height:2px;background:linear-gradient(90deg,#009900 0px,#029900 123px,#519900 171px,#969900 204px,#996600 234px,#994000 273px,#991f00 339px,#990400 459px,#990000 567px,#990000 599px)"></i><i style="top:6px;height:2px;background:linear-gradient(90deg,#009900 0px,#019900 123px,#519900 171px,#979900 204px,#996a00 231px,#994400 267px,#992300 327px,#990800 435px,#990000 525px,#990000 599px)"></i><i style="top:8px;height:2px;background:linear-gradient(90deg,#009901 0px,#019900 123px,#519900 171px,#979900 204px,#996900 231px,#994400 267px,#992300 327px,#990800 435px,#990000 522px,#990000 599px)"></i><i style="top:10px;height:2px;background:linear-gradient(90deg,#009903 0px,#009900 123px,#519900 171px,#989900 204px,#996900 231px,#994400 267px,#992300 327px,#990700 435px,#990000 522px,#990000 599px)"></i><i style="top:12px;height:2px;background:linear-gradient(90deg,#009905 0px,#009900 123px,#4b9900 168px,#989900 204px,#996c00 228px,#994500 264px,#992500 321px,#990900 426px,#990000 516px,#990000 599px)"></i><i style="top:14px;height:2px;background:linear-gradient(90deg,#009907 0px,#009900 123px,#4b9900 168px,#999900 204px,#996c00 228px,#994500 264px,#992400 321px,#990800 426px,#990000 513px,#990000 599px)"></i><i style="top:16px;height:2px;background:linear-gradient(90deg,#00990a 0px,#009900 123px,#459900 165px,#999900 204px,#996b00 228px,#994500 264px,#992400 321px,#990800 426px,#990000 513px,#990000 599px)"></i><i style="top:18px;height:2px;background:linear-gradient(90deg,#00990c 0px,#039900 126px,#509900 171px,#999800 204px,#996b00 228px,#994400 264px,#992200 324px,#990700 432px,#990000 516px,#990000 599px)"></i><i style="top:20px;height:2px;background:linear-gradient(90deg,#00990e 0px,#029902 126px,#509900 171px,#999800 204px,#996a00 228px,#994400 264px,#992200 324px,#990700 432px,#990000 516px,#990000 599px)"></i><i style="top:22px;height:2px;background:linear-gradient(90deg,#009910 0px,#029905 126px,#509900 171px,#999700 204px,#996a00 228px,#994300 264px,#992200 324px,#990600 432px,#990000 516px,#990000 599px)"></i><i style="top:24px;height:2px;background:linear-gradient(90deg,#009912 0px,#019908 126px,#509902 171px,#999700 204px,#996e00 225px,#994800 258px,#992600 312px,#990a00 408px,#990000 501px,#990000 599px)"></i><i style="top:26px;height:2px;background:linear-gradient(90deg,#009914 0px,#01990b 126px,#509905 171px,#999700 204px,#996d00 225px,#994700 258px,#992600 312px,#990a00 408px,#990000 498px,#990000 599px)"></i><i style="top:28px;height:2px;background:linear-gradient(90deg,#009916 0px,#00990e 126px,#509909 171px,#999604 204px,#996d00 225px,#994700 258px,#992500 312px,#990a00 408px,#990000 498px,#990000 599px)"></i><i style="top:30px;height:2px;background:linear-gradient(90deg,#009919 0px,#009911 126px,#50990c 171px,#959908 201px,#998806 210px,#996002 234px,#993b00 273px,#991b00 339px,#990100 462px,#990000 599px)"></i><i style="top:32px;height:2px;background:linear-gradient(90deg,#00991b 0px,#009914 126px,#4a9910 168px,#95990c 201px,#997b08 216px,#995403 243px,#993100 288px,#991200 366px,#990000 480px,#990000 599px)"></i><i style="top:34px;height:2px;background:linear-gradient(90deg,#00991d 0px,#009917 126px,#449914 165px,#969910 201px,#996708 228px,#994003 264px,#991f00 324px,#990500 432px,#990000 525px,#990000 599px)"></i><i style="top:36px;height:2px;background:linear-gradient(90deg,#00991f 0px,#03991a 129px,#509917 171px,#969914 201px,#99660b 228px,#994005 264px,#991f00 324px,#990400 432px,#990000 528px,#990000 599px)"></i><i style="top:38px;height:2px;background:linear-gradient(90deg,#009922 0px,#02991d 129px,#50991a 171px,#979918 201px,#99660e 228px,#993f07 264px,#991f01 324px,#990400 432px,#990000 546px,#990000 599px)"></i><i style="top:40px;height:2px;background:linear-gradient(90deg,#009924 0px,#029920 129px,#50991e 171px,#97991c 201px,#996a12 225px,#99440a 258px,#992303 312px,#990700 411px,#990000 492px,#990000 599px)"></i><i style="top:42px;height:2px;background:linear-gradient(90deg,#009926 0px,#019923 129px,#509922 171px,#989920 201px,#996915 225px,#99430c 258px,#992305 312px,#990700 411px,#990000 489px,#990000 599px)"></i><i style="top:44px;height:2px;background:linear-gradient(90deg,#009929 0px,#019926 129px,#509925 171px,#989924 201px,#996d19 222px,#994810 252px,#992607 303px,#990a00 393px,#990000 477px,#990000 599px)"></i><i style="top:46px;height:2px;background:linear-gradient(90deg,#00992b 0px,#00992a 129px,#509929 171px,#999928 201px,#996d1c 222px,#994812 252px,#992609 303px,#990a01 393px,#990000 477px,#990000 599px)"></i><i style="top:48px;height:2px;background:linear-gradient(90deg,#00992d 0px,#00992d 129px,#50992d 171px,#99992d 201px,#996c20 222px,#994715 252px,#99250b 303px,#990a02 393px,#990000 474px,#990000 599px)"></i><i style="top:50px;height:2px;background:linear-gradient(90deg,#009930 0px,#009930 129px,#499931 168px,#999831 201px,#996c23 222px,#994717 252px,#99250c 303px,#990904 393px,#990000 474px,#990000 599px)"></i><i style="top:52px;height:2px;background:linear-gradient(90deg,#009932 0px,#009934 129px,#439935 165px,#999835 201px,#996b26 222px,#994619 252px,#99240e 303px,#990905 393px,#990000 474px,#990000 599px)"></i><i style="top:54px;height:2px;background:linear-gradient(90deg,#009935 0px,#009937 129px,#3c9938 162px,#999739 201px,#996b29 222px,#99461c 252px,#992410 303px,#990906 393px,#990001 471px,#990000 599px)"></i><i style="top:56px;height:2px;background:linear-gradient(90deg,#009937 0px,#03993b 132px,#4f993d 171px,#99973e 201px,#996a2c 222px,#99451e 252px,#992411 303px,#990807 396px,#990002 471px,#990000 599px)"></i><i style="top:58px;height:2px;background:linear-gradient(90deg,#00993a 0px,#02993f 132px,#4f9941 171px,#999642 201px,#996930 222px,#994421 252px,#992313 303px,#990708 396px,#990003 471px,#990000 599px)"></i><i style="top:60px;height:2px;background:linear-gradient(90deg,#00993c 0px,#029942 132px,#4f9945 171px,#949948 198px,#998e43 204px,#996431 225px,#993f21 258px,#991f13 312px,#990408 411px,#990003 501px,#990000 599px)"></i><i style="top:62px;height:2px;background:linear-gradient(90deg,#00993f 0px,#019946 132px,#4f9949 171px,#94994c 198px,#998d47 204px,#996434 225px,#993e23 258px,#991e15 312px,#990308 414px,#990000 585px,#990000 599px)"></i><i style="top:64px;height:2px;background:linear-gradient(90deg,#009941 0px,#01994a 132px,#4f994e 171px,#959951 198px,#998548 207px,#995a33 231px,#993722 267px,#991713 330px,#990008 438px,#990000 599px)"></i><i style="top:66px;height:2px;background:linear-gradient(90deg,#009944 0px,#00994d 132px,#4f9952 171px,#959956 198px,#997845 213px,#994f31 240px,#992c1f 282px,#990f10 357px,#990008 450px,#990001 599px)"></i><i style="top:68px;height:2px;background:linear-gradient(90deg,#009946 0px,#009951 132px,#489956 168px,#96995b 198px,#996741 222px,#99422d 252px,#99211c 303px,#99060d 396px,#990007 468px,#990002 599px)"></i><i style="top:70px;height:2px;background:linear-gradient(90deg,#009949 0px,#009955 132px,#48995a 168px,#969960 198px,#996644 222px,#994130 252px,#99211d 303px,#99050e 396px,#990008 468px,#990002 599px)"></i><i style="top:72px;height:2px;background:linear-gradient(90deg,#00994c 0px,#009959 132px,#41995e 165px,#979965 198px,#996a4a 219px,#994434 249px,#992321 297px,#990711 384px,#99000a 453px,#990003 599px)"></i><i style="top:74px;height:2px;background:linear-gradient(90deg,#00994e 0px,#00995d 132px,#3a9962 162px,#8f996a 195px,#98996b 198px,#996a4e 219px,#994336 249px,#992222 297px,#990712 384px,#99000b 453px,#990003 599px)"></i><i style="top:76px;height:2px;background:linear-gradient(90deg,#009951 0px,#039962 135px,#4f9969 171px,#989970 198px,#996952 219px,#994239 249px,#992224 297px,#990713 384px,#99000c 453px,#990004 599px)"></i><i style="top:78px;height:2px;background:linear-gradient(90deg,#009954 0px,#029966 135px,#4f996e 171px,#999975 198px,#996e59 216px,#994840 243px,#992629 288px,#990a16 369px,#99000e 441px,#990005 599px)"></i><i style="top:80px;height:2px;background:linear-gradient(90deg,#009957 0px,#01996a 135px,#4f9973 171px,#99997b 198px,#996d5d 216px,#994742 243px,#99252b 288px,#990918 369px,#99000f 441px,#990005 599px)"></i><i style="top:82px;height:2px;background:linear-gradient(90deg,#009959 0px,#01996e 135px,#4f9977 171px,#999880 198px,#996d61 216px,#994745 243px,#99252d 288px,#990919 369px,#990010 441px,#990006 599px)"></i><i style="top:84px;height:2px;background:linear-gradient(90deg,#00995c 0px,#009972 135px,#4f997d 171px,#999885 198px,#996c65 216px,#994648 243px,#99252f 288px,#99091a 369px,#990011 438px,#990007 599px)"></i><i style="top:86px;height:2px;background:linear-gradient(90deg,#00995f 0px,#009977 135px,#4e9982 171px,#99978a 198px,#996c68 216px,#99464b 243px,#992431 288px,#99081b 369px,#990012 438px,#990007 599px)"></i><i style="top:88px;height:2px;background:linear-gradient(90deg,#009962 0px,#00997b 135px,#479986 168px,#999690 198px,#996b6c 216px,#99454e 243px,#992433 288px,#99081d 369px,#990013 435px,#990008 599px)"></i><i style="top:90px;height:2px;background:linear-gradient(90deg,#009965 0px,#009980 135px,#3f998a 165px,#999695 198px,#996a70 216px,#994451 243px,#992335 288px,#99081e 369px,#990014 435px,#990008 599px)"></i><i style="top:92px;height:2px;background:linear-gradient(90deg,#009968 0px,#009984 135px,#38998e 162px,#909599 195px,#989499 198px,#996470 219px,#993e4f 249px,#991e33 297px,#99031c 387px,#99000d 534px,#990009 599px)"></i><i style="top:94px;height:2px;background:linear-gradient(90deg,#00996b 0px,#009988 132px,#03998a 138px,#4e9997 171px,#998c98 201px,#996374 219px,#993d51 249px,#991e35 297px,#99031d 387px,#99000a 599px)"></i><i style="top:96px;height:2px;background:linear-gradient(90deg,#00996e 0px,#00998c 129px,#02998f 138px,#4c9699 171px,#958799 201px,#996e82 213px,#994960 237px,#992841 276px,#990b26 348px,#990019 420px,#99000a 599px)"></i><i style="top:98px;height:2px;background:linear-gradient(90deg,#009971 0px,#00998f 126px,#029994 138px,#439299 168px,#988199 204px,#99546e 228px,#99324d 261px,#991431 318px,#99001c 408px,#99000b 599px)"></i><i style="top:100px;height:2px;background:linear-gradient(90deg,#009974 0px,#009993 123px,#019998 138px,#997a98 207px,#995372 228px,#993150 261px,#991432 318px,#99001d 408px,#99000c 599px)"></i><i style="top:102px;height:2px;background:linear-gradient(90deg,#009977 0px,#009996 120px,#009599 138px,#8e7899 204px,#997296 210px,#994b6d 234px,#99284a 273px,#990d2d 339px,#99001d 414px,#99000c 599px)"></i><i style="top:104px;height:2px;background:linear-gradient(90deg,#00997a 0px,#009699 123px,#009099 138px,#8a7499 204px,#987199 210px,#99476d 237px,#99264a 276px,#990b2d 345px,#99001e 414px,#99000d 599px)"></i><i style="top:106px;height:2px;background:linear-gradient(90deg,#00997d 0px,#009699 111px,#008c99 138px,#866f99 204px,#996b98 213px,#994670 237px,#99264c 276px,#990b2f 342px,#990020 411px,#99000d 599px)"></i><i style="top:108px;height:2px;background:linear-gradient(90deg,#009980 0px,#009699 99px,#008799 138px,#7c6d99 201px,#996496 216px,#99426f 240px,#99234d 279px,#99092f 348px,#990021 411px,#99000e 599px)"></i><i style="top:110px;height:2px;background:linear-gradient(90deg,#009983 0px,#009699 87px,#008399 138px,#6c6c99 195px,#986399 216px,#993e6f 243px,#99214d 282px,#990830 351px,#990022 411px,#99000f 599px)"></i><i style="top:112px;height:2px;background:linear-gradient(90deg,#009987 0px,#009699 75px,#037e99 141px,#995d98 219px,#993d72 243px,#99214f 282px,#990831 351px,#990023 411px,#99000f 599px)"></i><i style="top:114px;height:2px;background:linear-gradient(90deg,#00998a 0px,#009599 66px,#027b99 141px,#995896 222px,#99376e 249px,#991b4c 291px,#99042e 366px,#99001b 471px,#990010 599px)"></i><i style="top:116px;height:2px;background:linear-gradient(90deg,#00998d 0px,#009599 54px,#027799 141px,#925799 219px,#995294 225px,#99346d 252px,#99184a 297px,#99022d 375px,#990016 531px,#990011 599px)"></i><i style="top:118px;height:2px;background:linear-gradient(90deg,#009990 0px,#009599 45px,#017499 141px,#995298 225px,#993370 252px,#99194e 294px,#990230 369px,#990018 516px,#990011 599px)"></i><i style="top:120px;height:2px;background:linear-gradient(90deg,#009994 0px,#009399 39px,#007199 141px,#905099 222px,#994d97 228px,#993070 255px,#99164c 300px,#99002f 378px,#990017 531px,#990012 599px)"></i><i style="top:122px;height:2px;background:linear-gradient(90deg,#009997 0px,#006d99 141px,#924c99 225px,#994895 231px,#992b6c 261px,#991249 309px,#99002e 387px,#990016 549px,#990013 599px)"></i><i style="top:124px;height:2px;background:linear-gradient(90deg,#009799 0px,#006a99 141px,#894b99 222px,#994799 231px,#992a6f 261px,#99114b 309px,#99002f 387px,#990017 546px,#990013 599px)"></i><i style="top:126px;height:2px;background:linear-gradient(90deg,#009499 0px,#006899 141px,#804a99 219px,#994397 234px,#99276e 264px,#99104c 312px,#990031 384px,#990019 537px,#990014 599px)"></i><i style="top:128px;height:2px;background:linear-gradient(90deg,#009199 0px,#036499 144px,#924399 231px,#993e95 237px,#99256e 267px,#990e4c 315px,#990032 384px,#99001a 534px,#990014 599px)"></i><i style="top:130px;height:2px;background:linear-gradient(90deg,#008e99 0px,#026199 144px,#993e99 237px,#992471 267px,#990e4e 315px,#990034 384px,#99001b 534px,#990015 599px)"></i><i style="top:132px;height:2px;background:linear-gradient(90deg,#008b99 0px,#025f99 144px,#993a97 240px,#992270 270px,#990c4e 318px,#990036 381px,#99001c 525px,#990016 599px)"></i><i style="top:134px;height:2px;background:linear-gradient(90deg,#008899 0px,#015c99 144px,#933a99 237px,#993391 246px,#991c6a 279px,#990848 333px,#990035 387px,#99001c 534px,#990016 599px)"></i><i style="top:136px;height:2px;background:linear-gradient(90deg,#008599 0px,#015a99 144px,#943799 240px,#993394 246px,#991c6d 279px,#99074a 333px,#990037 384px,#99001e 525px,#990017 599px)"></i><i style="top:138px;height:2px;background:linear-gradient(90deg,#008299 0px,#005799 144px,#913599 240px,#992f92 249px,#99186a 285px,#990448 342px,#990032 408px,#99001a 573px,#990018 599px)"></i><i style="top:140px;height:2px;background:linear-gradient(90deg,#008099 0px,#005599 144px,#933299 243px,#992c91 252px,#991669 288px,#990348 345px,#99002b 447px,#990018 599px)"></i><i style="top:142px;height:2px;background:linear-gradient(90deg,#007d99 0px,#005399 144px,#8b3199 240px,#992e99 249px,#991871 282px,#99054d 336px,#990039 390px,#990020 531px,#990019 599px)"></i><i style="top:144px;height:2px;background:linear-gradient(90deg,#007b99 0px,#005199 144px,#833199 237px,#992b97 252px,#99156e 288px,#99024b 345px,#99002e 444px,#99001a 599px)"></i><i style="top:146px;height:2px;background:linear-gradient(90deg,#007899 0px,#034e99 147px,#932b99 249px,#992592 258px,#99126b 294px,#990049 354px,#99002c 459px,#99001a 599px)"></i><i style="top:148px;height:2px;background:linear-gradient(90deg,#007699 0px,#024c99 147px,#952899 252px,#992390 261px,#990f69 300px,#990046 363px,#99002a 474px,#99001b 599px)"></i><i style="top:150px;height:2px;background:linear-gradient(90deg,#007499 0px,#024a99 147px,#922799 252px,#992293 261px,#990e6b 300px,#990049 360px,#99002c 468px,#99001c 599px)"></i><i style="top:152px;height:2px;background:linear-gradient(90deg,#007199 0px,#014899 147px,#932499 255px,#991d8e 267px,#990b66 309px,#990049 363px,#99002c 471px,#99001c 599px)"></i><i style="top:154px;height:2px;background:linear-gradient(90deg,#006f99 0px,#014699 147px,#952299 258px,#991d91 267px,#990b6a 306px,#99004c 360px,#99002f 465px,#99001d 599px)"></i><i style="top:156px;height:2px;background:linear-gradient(90deg,#006d99 0px,#004599 147px,#922099 258px,#991c93 267px,#990a6c 306px,#99004f 357px,#990031 459px,#99001d 599px)"></i><i style="top:158px;height:2px;background:linear-gradient(90deg,#006b99 0px,#004399 147px,#931e99 261px,#99188e 273px,#990768 315px,#99004f 360px,#990031 462px,#99001e 599px)"></i><i style="top:160px;height:2px;background:linear-gradient(90deg,#006999 0px,#004199 147px,#8d1e99 258px,#991b99 267px,#990970 306px,#990053 354px,#990034 450px,#99001f 599px)"></i><i style="top:162px;height:2px;background:linear-gradient(90deg,#006799 0px,#033f99 150px,#991998 270px,#990870 309px,#990053 357px,#990034 456px,#99001f 599px)"></i><i style="top:164px;height:2px;background:linear-gradient(90deg,#006599 0px,#023d99 150px,#941999 267px,#99138f 279px,#990367 324px,#990045 396px,#990029 525px,#990020 599px)"></i><i style="top:166px;height:2px;background:linear-gradient(90deg,#006399 0px,#023c99 150px,#951799 270px,#99118e 282px,#990267 327px,#990044 402px,#990028 534px,#990021 599px)"></i><i style="top:168px;height:2px;background:linear-gradient(90deg,#006199 0px,#023a99 150px,#921699 270px,#991294 279px,#99036d 321px,#99004a 390px,#99002d 510px,#990021 599px)"></i><i style="top:170px;height:2px;background:linear-gradient(90deg,#006099 0px,#013999 150px,#941499 273px,#990f8f 285px,#990068 330px,#990046 405px,#99002a 537px,#990022 599px)"></i><i style="top:172px;height:2px;background:linear-gradient(90deg,#005e99 0px,#013899 150px,#951299 276px,#990d8e 288px,#990066 336px,#990044 414px,#990028 552px,#990023 599px)"></i><i style="top:174px;height:2px;background:linear-gradient(90deg,#005c99 0px,#003699 150px,#931199 276px,#990d94 285px,#99006c 330px,#990049 402px,#99002d 528px,#990023 599px)"></i><i style="top:176px;height:2px;background:linear-gradient(90deg,#005b99 0px,#003599 150px,#940f99 279px,#990a90 291px,#99006a 336px,#990048 411px,#99002b 543px,#990024 599px)"></i><i style="top:178px;height:2px;background:linear-gradient(90deg,#005999 0px,#033399 153px,#950d99 282px,#99088c 297px,#99006a 339px,#990047 417px,#99002a 555px,#990025 599px)"></i><i style="top:180px;height:2px;background:linear-gradient(90deg,#005799 0px,#033299 153px,#990a98 288px,#99006f 333px,#99004c 405px,#99002e 531px,#990025 599px)"></i><i style="top:182px;height:2px;background:linear-gradient(90deg,#005699 0px,#023199 153px,#940b99 285px,#990690 297px,#99006f 336px,#99004c 408px,#99002f 534px,#990026 599px)"></i><i style="top:184px;height:2px;background:linear-gradient(90deg,#005499 0px,#022f99 153px,#950999 288px,#990389 306px,#990062 360px,#990041 450px,#990027 599px)"></i><i style="top:186px;height:2px;background:linear-gradient(90deg,#005399 0px,#022e99 153px,#930899 288px,#990595 297px,#990072 336px,#99004f 408px,#990031 531px,#990027 599px)"></i><i style="top:188px;height:2px;background:linear-gradient(90deg,#005299 0px,#012d99 153px,#940799 291px,#99028d 306px,#990067 357px,#990045 441px,#990029 591px,#990028 599px)"></i><i style="top:190px;height:2px;background:linear-gradient(90deg,#005099 0px,#012c99 153px,#920699 291px,#990396 300px,#99006e 348px,#99004b 426px,#99002e 561px,#990029 599px)"></i><i style="top:192px;height:2px;background:linear-gradient(90deg,#004f99 0px,#012b99 153px,#930499 294px,#990192 306px,#99006a 357px,#990047 441px,#99002b 588px,#990029 599px)"></i><i style="top:194px;height:2px;background:linear-gradient(90deg,#004d99 0px,#032999 156px,#940399 297px,#99008e 312px,#990067 366px,#990045 453px,#99002a 599px)"></i><i style="top:196px;height:2px;background:linear-gradient(90deg,#004c99 0px,#032899 156px,#950199 300px,#99007e 333px,#990058 399px,#990039 510px,#99002b 599px)"></i><i style="top:198px;height:2px;background:linear-gradient(90deg,#004b99 0px,#022799 156px,#990098 306px,#99006f 357px,#99004b 438px,#99002e 579px,#99002b 599px)"></i><i style="top:200px;height:2px;background:linear-gradient(90deg,#004a99 0px,#022699 156px,#940099 303px,#99008e 318px,#990066 375px,#990044 468px,#99002c 599px)"></i><i style="top:202px;height:2px;background:linear-gradient(90deg,#004899 0px,#022599 156px,#950099 306px,#99007c 342px,#990057 411px,#990038 528px,#99002d 599px)"></i><i style="top:204px;height:2px;background:linear-gradient(90deg,#004799 0px,#012499 156px,#930099 306px,#990092 318px,#99006b 372px,#990048 459px,#99002d 599px)"></i><i style="top:206px;height:2px;background:linear-gradient(90deg,#004699 0px,#012499 156px,#910099 306px,#990094 318px,#99006c 372px,#990049 459px,#99002e 599px)"></i><i style="top:208px;height:2px;background:linear-gradient(90deg,#004599 0px,#012399 156px,#8f0099 306px,#990096 318px,#99006e 372px,#99004a 459px,#99002f 599px)"></i><i style="top:210px;height:2px;background:linear-gradient(90deg,#004499 0px,#012299 156px,#8a0099 303px,#990095 321px,#99006d 375px,#99004b 462px,#99002f 599px)"></i><i style="top:212px;height:2px;background:linear-gradient(90deg,#004399 0px,#032099 159px,#850099 300px,#990097 321px,#99006f 375px,#99004c 462px,#990030 599px)"></i><i style="top:214px;height:2px;background:linear-gradient(90deg,#004199 0px,#031f99 159px,#840099 300px,#990096 324px,#99006f 378px,#99004c 465px,#990031 599px)"></i><i style="top:216px;height:2px;background:linear-gradient(90deg,#004099 0px,#021f99 159px,#7f0099 297px,#990096 327px,#99006d 384px,#99004a 474px,#990031 599px)"></i><i style="top:218px;height:2px;background:linear-gradient(90deg,#003f99 0px,#021e99 159px,#7d0099 297px,#990097 327px,#99006e 384px,#99004b 474px,#990032 599px)"></i><i style="top:220px;height:2px;background:linear-gradient(90deg,#003e99 0px,#021d99 159px,#790099 294px,#990097 330px,#99006e 387px,#99004b 477px,#990033 599px)"></i><i style="top:222px;height:2px;background:linear-gradient(90deg,#003d99 0px,#011c99 159px,#750099 291px,#990096 333px,#99006e 390px,#99004b 483px,#990034 599px)"></i><i style="top:224px;height:2px;background:linear-gradient(90deg,#003c99 0px,#011c99 159px,#730099 291px,#990098 333px,#99006f 390px,#99004c 483px,#990034 599px)"></i><i style="top:226px;height:2px;background:linear-gradient(90deg,#003b99 0px,#011b99 159px,#6f0099 288px,#990097 336px,#99006d 396px,#99004a 492px,#990035 599px)"></i><i style="top:228px;height:2px;background:linear-gradient(90deg,#003a99 0px,#031a99 162px,#6b0099 285px,#990096 339px,#99006d 399px,#99004a 495px,#990036 599px)"></i><i style="top:230px;height:2px;background:linear-gradient(90deg,#003999 0px,#031999 162px,#690099 285px,#990098 339px,#99006e 399px,#99004b 495px,#990036 599px)"></i><i style="top:232px;height:2px;background:linear-gradient(90deg,#003999 0px,#021899 162px,#650099 282px,#990097 342px,#99006e 402px,#99004b 498px,#990037 599px)"></i><i style="top:234px;height:2px;background:linear-gradient(90deg,#003899 0px,#021799 162px,#640099 282px,#990096 345px,#99006e 405px,#99004b 504px,#990038 599px)"></i><i style="top:236px;height:2px;background:linear-gradient(90deg,#003799 0px,#021799 162px,#600099 279px,#990098 345px,#99006f 405px,#99004c 501px,#990038 599px)"></i><i style="top:238px;height:2px;background:linear-gradient(90deg,#003699 0px,#021699 162px,#5f0099 279px,#990097 348px,#99006e 411px,#99004b 510px,#990039 599px)"></i><i style="top:240px;height:2px;background:linear-gradient(90deg,#003599 0px,#011699 162px,#5b0099 276px,#990096 351px,#99006d 414px,#99004a 516px,#99003a 599px)"></i><i style="top:242px;height:2px;background:linear-gradient(90deg,#003499 0px,#011599 162px,#5a0099 276px,#990098 351px,#99006f 414px,#99004c 513px,#99003a 599px)"></i><i style="top:244px;height:2px;background:linear-gradient(90deg,#003399 0px,#031499 165px,#570099 273px,#990097 354px,#99006f 417px,#99004b 519px,#99003b 599px)"></i><i style="top:246px;height:2px;background:linear-gradient(90deg,#003399 0px,#031399 165px,#530099 270px,#990096 357px,#99006d 423px,#99004a 528px,#99003c 599px)"></i><i style="top:248px;height:2px;background:linear-gradient(90deg,#003299 0px,#021399 165px,#520099 270px,#990098 357px,#990070 420px,#99004c 522px,#99003c 599px)"></i><i style="top:250px;height:2px;background:linear-gradient(90deg,#003199 0px,#021299 165px,#4f0099 267px,#990097 360px,#99006e 426px,#99004b 531px,#99003d 599px)"></i><i style="top:252px;height:2px;background:linear-gradient(90deg,#003099 0px,#021199 165px,#4e0099 267px,#990096 363px,#99006e 429px,#99004b 534px,#99003e 599px)"></i><i style="top:254px;height:2px;background:linear-gradient(90deg,#002f99 0px,#021199 165px,#4b0099 264px,#990098 363px,#99006f 429px,#99004c 534px,#99003f 599px)"></i><i style="top:256px;height:2px;background:linear-gradient(90deg,#002f99 0px,#011099 165px,#4a0099 264px,#990097 366px,#99006f 432px,#99004b 540px,#99003f 599px)"></i><i style="top:258px;height:2px;background:linear-gradient(90deg,#002e99 0px,#011099 165px,#470099 261px,#990096 369px,#99006d 438px,#99004a 549px,#990040 599px)"></i><i style="top:260px;height:2px;background:linear-gradient(90deg,#002d99 0px,#030f99 168px,#460099 261px,#990098 369px,#990070 435px,#99004c 543px,#990041 599px)"></i><i style="top:262px;height:2px;background:linear-gradient(90deg,#002c99 0px,#030e99 168px,#430099 258px,#990097 372px,#99006e 441px,#99004b 552px,#990041 599px)"></i><i style="top:264px;height:2px;background:linear-gradient(90deg,#002c99 0px,#030e99 168px,#400099 255px,#990096 375px,#99006e 444px,#99004b 555px,#990042 599px)"></i><i style="top:266px;height:2px;background:linear-gradient(90deg,#002b99 0px,#020d99 168px,#3f0099 255px,#990098 375px,#99006f 444px,#99004c 555px,#990043 599px)"></i><i style="top:268px;height:2px;background:linear-gradient(90deg,#002a99 0px,#020d99 168px,#3c0099 252px,#990097 378px,#99006f 447px,#99004c 558px,#990044 599px)"></i><i style="top:270px;height:2px;background:linear-gradient(90deg,#002a99 0px,#020c99 168px,#3b0099 252px,#990097 381px,#99006e 453px,#99004b 567px,#990044 599px)"></i><i style="top:272px;height:2px;background:linear-gradient(90deg,#002999 0px,#020c99 168px,#3b0099 252px,#990096 384px,#99006d 456px,#99004a 573px,#990045 599px)"></i><i style="top:274px;height:2px;background:linear-gradient(90deg,#002899 0px,#010b99 168px,#380099 249px,#990097 384px,#99006f 456px,#99004c 570px,#990046 599px)"></i><i style="top:276px;height:2px;background:linear-gradient(90deg,#002899 0px,#010b99 168px,#350099 246px,#990097 387px,#99006e 459px,#99004b 576px,#990046 599px)"></i><i style="top:278px;height:2px;background:linear-gradient(90deg,#002799 0px,#030a99 171px,#350099 246px,#990096 390px,#99006d 465px,#99004a 585px,#990047 599px)"></i><i style="top:280px;height:2px;background:linear-gradient(90deg,#002699 0px,#030999 171px,#340099 246px,#990097 390px,#99006e 465px,#99004b 585px,#990048 599px)"></i><i style="top:282px;height:2px;background:linear-gradient(90deg,#002699 0px,#020999 171px,#310099 243px,#990097 393px,#99006e 468px,#99004b 588px,#990048 599px)"></i><i style="top:284px;height:2px;background:linear-gradient(90deg,#002599 0px,#020999 171px,#310099 243px,#990096 396px,#99006e 471px,#99004b 591px,#990049 599px)"></i><i style="top:286px;height:2px;background:linear-gradient(90deg,#002599 0px,#020899 171px,#2e0099 240px,#990098 396px,#99006f 471px,#99004c 591px,#99004a 599px)"></i><i style="top:288px;height:2px;background:linear-gradient(90deg,#002499 0px,#020899 171px,#300099 243px,#990097 399px,#99006f 474px,#99004b 597px,#99004b 599px)"></i><i style="top:290px;height:2px;background:linear-gradient(90deg,#002399 0px,#020799 171px,#2d0099 240px,#990096 402px,#99006d 480px,#99004b 599px)"></i><i style="top:292px;height:2px;background:linear-gradient(90deg,#002399 0px,#010799 171px,#2c0099 240px,#990098 402px,#99006e 480px,#99004c 599px)"></i><i style="top:294px;height:2px;background:linear-gradient(90deg,#002299 0px,#030699 174px,#2e0099 243px,#990097 405px,#99006e 483px,#99004d 599px)"></i><i style="top:296px;height:2px;background:linear-gradient(90deg,#002299 0px,#030699 174px,#2d0099 243px,#990096 408px,#99006e 486px,#99004e 599px)"></i><i style="top:298px;height:2px;background:linear-gradient(90deg,#002199 0px,#030599 174px,#2f0099 246px,#990098 408px,#99006f 486px,#99004e 599px)"></i><i style="top:300px;height:2px;background:linear-gradient(90deg,#002199 0px,#020599 174px,#320099 252px,#990097 411px,#99006e 492px,#99004f 599px)"></i><i style="top:302px;height:2px;background:linear-gradient(90deg,#002099 0px,#020499 174px,#330099 255px,#990096 414px,#99006e 495px,#990050 599px)"></i><i style="top:304px;height:2px;background:linear-gradient(90deg,#002099 0px,#020499 174px,#3a0099 267px,#990098 414px,#99006e 495px,#990050 599px)"></i><i style="top:306px;height:2px;background:linear-gradient(90deg,#001f99 0px,#020499 174px,#480099 291px,#990097 417px,#99006e 498px,#990051 599px)"></i><i style="top:308px;height:2px;background:linear-gradient(90deg,#001f99 0px,#020399 174px,#6e0099 351px,#990096 420px,#99006e 501px,#990052 599px)"></i><i style="top:310px;height:2px;background:linear-gradient(90deg,#001e99 0px,#030399 177px,#960099 414px,#99006a 516px,#990053 599px)"></i><i style="top:312px;height:2px;background:linear-gradient(90deg,#001e99 0px,#030299 177px,#970099 417px,#99006c 513px,#990053 599px)"></i><i style="top:314px;height:2px;background:linear-gradient(90deg,#001d99 0px,#030299 177px,#960099 417px,#990082 462px,#99005c 567px,#990054 599px)"></i><i style="top:316px;height:2px;background:linear-gradient(90deg,#001d99 0px,#020299 177px,#960099 420px,#99006a 522px,#990055 599px)"></i><i style="top:318px;height:2px;background:linear-gradient(90deg,#001c99 0px,#020199 177px,#950099 420px,#99008e 444px,#990066 537px,#990056 599px)"></i><i style="top:320px;height:2px;background:linear-gradient(90deg,#001c99 0px,#020199 177px,#960099 423px,#990081 471px,#99005b 579px,#990056 599px)"></i><i style="top:322px;height:2px;background:linear-gradient(90deg,#001b99 0px,#020199 177px,#940099 423px,#99008f 447px,#990067 540px,#990057 599px)"></i><i style="top:324px;height:2px;background:linear-gradient(90deg,#001b99 0px,#020099 177px,#950099 426px,#99008d 453px,#990065 549px,#990058 599px)"></i><i style="top:326px;height:2px;background:linear-gradient(90deg,#001a99 0px,#010099 177px,#960099 429px,#990080 480px,#99005a 591px,#990059 599px)"></i><i style="top:328px;height:2px;background:linear-gradient(90deg,#001a99 0px,#030099 180px,#960099 432px,#99006a 540px,#990059 599px)"></i><i style="top:330px;height:2px;background:linear-gradient(90deg,#001999 0px,#030099 180px,#970099 435px,#99006c 537px,#99005a 599px)"></i><i style="top:332px;height:2px;background:linear-gradient(90deg,#001999 0px,#030099 180px,#960099 435px,#99007e 492px,#99005b 599px)"></i><i style="top:334px;height:2px;background:linear-gradient(90deg,#001899 0px,#020099 180px,#960099 438px,#99006a 546px,#99005b 599px)"></i><i style="top:336px;height:2px;background:linear-gradient(90deg,#001899 0px,#020099 180px,#950099 438px,#99008a 471px,#990063 573px,#99005c 599px)"></i><i style="top:338px;height:2px;background:linear-gradient(90deg,#001899 0px,#020099 180px,#960099 441px,#99007c 504px,#99005d 599px)"></i><i style="top:340px;height:2px;background:linear-gradient(90deg,#001799 0px,#020099 180px,#940099 441px,#99008f 465px,#990067 564px,#99005e 599px)"></i><i style="top:342px;height:2px;background:linear-gradient(90deg,#001799 0px,#020099 180px,#950099 444px,#990089 480px,#990061 588px,#99005e 599px)"></i><i style="top:344px;height:2px;background:linear-gradient(90deg,#001699 0px,#030099 183px,#960099 447px,#99007a 516px,#99005f 599px)"></i><i style="top:346px;height:2px;background:linear-gradient(90deg,#001699 0px,#010099 180px,#950099 447px,#99008e 474px,#990066 576px,#990060 599px)"></i><i style="top:348px;height:2px;background:linear-gradient(90deg,#001699 0px,#010099 180px,#950099 450px,#990088 489px,#990061 599px)"></i><i style="top:350px;height:2px;background:linear-gradient(90deg,#001599 0px,#000099 177px,#8b0099 435px,#990095 465px,#99006c 561px,#990061 599px)"></i><i style="top:352px;height:2px;background:linear-gradient(90deg,#001599 0px,#000099 177px,#880099 432px,#990096 465px,#99006d 561px,#990062 599px)"></i><i style="top:354px;height:2px;background:linear-gradient(90deg,#001499 0px,#000099 174px,#690099 378px,#990096 468px,#99006d 564px,#990063 599px)"></i><i style="top:356px;height:2px;background:linear-gradient(90deg,#001499 0px,#000099 171px,#0c0099 204px,#990097 468px,#99006e 564px,#990064 599px)"></i><i style="top:358px;height:2px;background:linear-gradient(90deg,#001499 0px,#000099 171px,#0b0099 201px,#990096 471px,#99006e 567px,#990064 599px)"></i><i style="top:360px;height:2px;background:linear-gradient(90deg,#001399 0px,#000099 168px,#060099 192px,#990098 471px,#99006f 567px,#990065 599px)"></i><i style="top:362px;height:2px;background:linear-gradient(90deg,#001399 0px,#000099 168px,#060099 192px,#990097 474px,#99006e 573px,#990066 599px)"></i><i style="top:364px;height:2px;background:linear-gradient(90deg,#001299 0px,#000099 165px,#040099 189px,#990097 477px,#99006e 576px,#990067 599px)"></i><i style="top:366px;height:2px;background:linear-gradient(90deg,#001299 0px,#000099 165px,#040099 189px,#970099 471px,#99006c 585px,#990068 599px)"></i><i style="top:368px;height:2px;background:linear-gradient(90deg,#001299 0px,#000099 162px,#040099 189px,#990097 480px,#99006e 579px,#990068 599px)"></i><i style="top:370px;height:2px;background:linear-gradient(90deg,#001199 0px,#000099 159px,#040099 189px,#960099 474px,#99006a 594px,#990069 599px)"></i><i style="top:372px;height:2px;background:linear-gradient(90deg,#001199 0px,#000099 159px,#030099 189px,#970099 477px,#99006b 594px,#99006a 599px)"></i><i style="top:374px;height:2px;background:linear-gradient(90deg,#001199 0px,#000099 156px,#030099 189px,#990097 486px,#99006e 588px,#99006b 599px)"></i><i style="top:376px;height:2px;background:linear-gradient(90deg,#001099 0px,#000099 156px,#030099 189px,#960099 480px,#99006b 599px)"></i><i style="top:378px;height:2px;background:linear-gradient(90deg,#001099 0px,#000099 153px,#030099 189px,#970099 483px,#99006c 599px)"></i><i style="top:380px;height:2px;background:linear-gradient(90deg,#001099 0px,#000099 153px,#030099 189px,#960099 483px,#99006d 599px)"></i><i style="top:382px;height:2px;background:linear-gradient(90deg,#000f99 0px,#000099 150px,#030099 189px,#960099 486px,#99006e 599px)"></i><i style="top:384px;height:2px;background:linear-gradient(90deg,#000f99 0px,#000099 147px,#020099 189px,#950099 486px,#990084 537px,#99006e 599px)"></i><i style="top:386px;height:2px;background:linear-gradient(90deg,#000f99 0px,#000099 147px,#040099 192px,#990097 498px,#99006f 599px)"></i><i style="top:388px;height:2px;background:linear-gradient(90deg,#000e99 0px,#000099 147px,#030099 192px,#960099 492px,#990070 599px)"></i><i style="top:390px;height:2px;background:linear-gradient(90deg,#000e99 0px,#000099 144px,#030099 192px,#970099 495px,#990071 599px)"></i><i style="top:392px;height:2px;background:linear-gradient(90deg,#000e99 0px,#000099 141px,#030099 192px,#960099 495px,#990072 599px)"></i><i style="top:394px;height:2px;background:linear-gradient(90deg,#000d99 0px,#000099 141px,#030099 192px,#960099 498px,#990072 599px)"></i><i style="top:396px;height:2px;background:linear-gradient(90deg,#000d99 0px,#000099 138px,#030099 192px,#970099 501px,#990073 599px)"></i><i style="top:398px;height:2px;background:linear-gradient(90deg,#000d99 0px,#000099 138px,#030099 192px,#960099 501px,#990074 599px)"></i><i style="top:400px;height:2px;background:linear-gradient(90deg,#000d99 0px,#000099 135px,#030099 192px,#960099 504px,#990075 599px)"></i><i style="top:402px;height:2px;background:linear-gradient(90deg,#000c99 0px,#000099 135px,#020099 192px,#950099 504px,#990082 564px,#990075 599px)"></i><i style="top:404px;height:2px;background:linear-gradient(90deg,#000c99 0px,#000099 132px,#020099 192px,#960099 507px,#990076 599px)"></i><i style="top:406px;height:2px;background:linear-gradient(90deg,#000c99 0px,#000099 132px,#030099 195px,#970099 510px,#990077 599px)"></i><i style="top:408px;height:2px;background:linear-gradient(90deg,#000b99 0px,#000099 129px,#030099 195px,#970099 513px,#990078 599px)"></i><i style="top:410px;height:2px;background:linear-gradient(90deg,#000b99 0px,#000099 129px,#030099 195px,#960099 513px,#990079 599px)"></i><i style="top:412px;height:2px;background:linear-gradient(90deg,#000b99 0px,#000099 126px,#030099 195px,#970099 516px,#990079 599px)"></i><i style="top:414px;height:2px;background:linear-gradient(90deg,#000a99 0px,#000099 126px,#030099 195px,#970099 519px,#99007a 599px)"></i><i style="top:416px;height:2px;background:linear-gradient(90deg,#000a99 0px,#000099 123px,#030099 195px,#960099 519px,#99007b 599px)"></i><i style="top:418px;height:2px;background:linear-gradient(90deg,#000a99 0px,#000099 123px,#020099 195px,#970099 522px,#99007c 599px)"></i><i style="top:420px;height:2px;background:linear-gradient(90deg,#000a99 0px,#000099 120px,#020099 195px,#960099 522px,#99007f 591px,#99007d 599px)"></i><i style="top:422px;height:2px;background:linear-gradient(90deg,#000999 0px,#000099 120px,#030099 198px,#980099 528px,#99007d 599px)"></i><i style="top:424px;height:2px;background:linear-gradient(90deg,#000999 0px,#000099 120px,#030099 198px,#970099 528px,#99007e 599px)"></i><i style="top:426px;height:2px;background:linear-gradient(90deg,#000999 0px,#000099 117px,#030099 198px,#970099 531px,#99007f 599px)"></i><i style="top:428px;height:2px;background:linear-gradient(90deg,#000999 0px,#000099 117px,#030099 198px,#960099 531px,#990080 599px)"></i><i style="top:430px;height:2px;background:linear-gradient(90deg,#000899 0px,#000099 117px,#030099 198px,#970099 534px,#990081 599px)"></i><i style="top:432px;height:2px;background:linear-gradient(90deg,#000899 0px,#000099 114px,#030099 198px,#960099 534px,#990081 599px)"></i><i style="top:434px;height:2px;background:linear-gradient(90deg,#000899 0px,#000099 114px,#020099 198px,#960099 537px,#990082 599px)"></i><i style="top:436px;height:2px;background:linear-gradient(90deg,#000899 0px,#000099 114px,#020099 198px,#970099 540px,#990083 599px)"></i><i style="top:438px;height:2px;background:linear-gradient(90deg,#000799 0px,#000099 111px,#020099 198px,#960099 540px,#990084 599px)"></i><i style="top:440px;height:2px;background:linear-gradient(90deg,#000799 0px,#000099 114px,#030099 201px,#980099 546px,#990085 599px)"></i><i style="top:442px;height:2px;background:linear-gradient(90deg,#000799 0px,#000099 111px,#030099 201px,#970099 546px,#990085 599px)"></i><i style="top:444px;height:2px;background:linear-gradient(90deg,#000799 0px,#000099 111px,#030099 201px,#970099 549px,#990086 599px)"></i><i style="top:446px;height:2px;background:linear-gradient(90deg,#000699 0px,#000099 111px,#030099 201px,#960099 549px,#990087 599px)"></i><i style="top:448px;height:2px;background:linear-gradient(90deg,#000699 0px,#000099 111px,#030099 201px,#970099 552px,#990088 599px)"></i></div>
<div style="left:1077px;top:81px;width:326px;height:311px;overflow:hidden;clip-path:polygon(325.3px 30.7px,0.2px 0.3px,50.5px 310.2px);"><i style="top:0px;height:2px;background:linear-gradient(90deg,#00ff02 0px,#5aff00 33px,#beff00 63px,#f8ff00 78px,#fffa00 81px,#ffbf00 99px,#ff8b00 123px,#ff5e00 156px,#ff3500 207px,#ff1100 288px,#ff0600 326px)"></i><i style="top:2px;height:2px;background:linear-gradient(90deg,#00ff06 0px,#50ff00 30px,#beff00 63px,#f9ff00 78px,#fff900 81px,#ffbe00 99px,#ff8a00 123px,#ff5d00 156px,#ff3400 207px,#ff1100 288px,#ff0600 326px)"></i><i style="top:4px;height:2px;background:linear-gradient(90deg,#00ff0b 0px,#47ff06 27px,#b3ff00 60px,#faff00 78px,#ffec00 84px,#ffb500 102px,#ff8400 126px,#ff5600 162px,#ff2e00 216px,#ff0c00 303px,#ff0600 326px)"></i><i style="top:6px;height:2px;background:linear-gradient(90deg,#00ff10 0px,#24ff0d 15px,#89ff06 48px,#faff00 78px,#ffec00 84px,#ffb400 102px,#ff8300 126px,#ff5500 162px,#ff2d00 216px,#ff0b00 303px,#ff0500 326px)"></i><i style="top:8px;height:2px;background:linear-gradient(90deg,#00ff15 0px,#13ff13 9px,#75ff0d 42px,#e2ff06 72px,#fbff04 78px,#ffd601 90px,#ff9f00 111px,#ff7100 138px,#ff4500 180px,#ff2000 243px,#ff0500 326px)"></i><i style="top:10px;height:2px;background:linear-gradient(90deg,#00ff1a 0px,#0aff19 6px,#75ff12 42px,#e3ff0c 72px,#fcff0b 78px,#ffba04 99px,#ff8700 123px,#ff5a00 156px,#ff3100 207px,#ff0f00 288px,#ff0400 326px)"></i><i style="top:12px;height:2px;background:linear-gradient(90deg,#00ff1f 0px,#02ff1e 3px,#6bff19 39px,#d7ff13 69px,#fdff11 78px,#ffc209 96px,#ff9104 117px,#ff6400 147px,#ff3a00 192px,#ff1600 264px,#ff0400 326px)"></i><i style="top:14px;height:2px;background:linear-gradient(90deg,#00ff24 0px,#01ff23 3px,#6bff1e 39px,#d8ff19 69px,#fdff17 78px,#ffc10f 96px,#ff9008 117px,#ff6302 147px,#ff3a00 192px,#ff1600 264px,#ff0300 326px)"></i><i style="top:16px;height:2px;background:linear-gradient(90deg,#00ff29 0px,#00ff28 3px,#60ff24 36px,#ccff20 66px,#feff1e 78px,#ffc915 93px,#ff950d 114px,#ff6605 144px,#ff3b00 189px,#ff1700 258px,#ff0300 326px)"></i><i style="top:18px;height:2px;background:linear-gradient(90deg,#00ff2e 0px,#00ff2d 3px,#60ff2a 36px,#cdff26 66px,#ffff24 78px,#ffc81b 93px,#ff9411 114px,#ff6509 144px,#ff3b01 189px,#ff1700 258px,#ff0200 326px)"></i><i style="top:20px;height:2px;background:linear-gradient(90deg,#00ff33 0px,#00ff33 3px,#56ff30 33px,#c1ff2d 63px,#fffe2b 78px,#ffc720 93px,#ff9316 114px,#ff640c 144px,#ff3a04 189px,#ff1600 258px,#ff0200 326px)"></i><i style="top:22px;height:2px;background:linear-gradient(90deg,#00ff38 0px,#06ff38 6px,#69ff35 39px,#ceff33 66px,#fffd32 78px,#ffc625 93px,#ff921a 114px,#ff6310 144px,#ff3907 189px,#ff1600 258px,#ff0200 326px)"></i><i style="top:24px;height:2px;background:linear-gradient(90deg,#00ff3e 0px,#05ff3d 6px,#69ff3b 39px,#ceff3a 66px,#fffc38 78px,#ffc52b 93px,#ff911e 114px,#ff6213 144px,#ff3909 189px,#ff1400 261px,#ff0100 326px)"></i><i style="top:26px;height:2px;background:linear-gradient(90deg,#00ff43 0px,#04ff43 6px,#69ff42 39px,#ceff40 66px,#fffc3f 78px,#ffc430 93px,#ff9123 114px,#ff6217 144px,#ff380c 189px,#ff1402 261px,#ff0100 326px)"></i><i style="top:28px;height:2px;background:linear-gradient(90deg,#00ff48 0px,#03ff48 6px,#69ff48 39px,#cfff47 66px,#f6ff47 75px,#fffb46 78px,#ffc336 93px,#ff9027 114px,#ff611a 144px,#ff370e 189px,#ff1304 261px,#ff0000 326px)"></i><i style="top:30px;height:2px;background:linear-gradient(90deg,#00ff4e 0px,#02ff4e 6px,#68ff4e 39px,#cfff4e 66px,#f7ff4e 75px,#fffa4d 78px,#ffc33c 93px,#ff8f2c 114px,#ff601e 144px,#ff3611 189px,#ff1206 261px,#ff0000 326px)"></i><i style="top:32px;height:2px;background:linear-gradient(90deg,#00ff53 0px,#01ff54 6px,#68ff54 39px,#d0ff55 66px,#f7ff55 75px,#fff953 78px,#ffc241 93px,#ff8e30 114px,#ff5f21 144px,#ff3614 189px,#ff1208 261px,#ff0002 326px)"></i><i style="top:34px;height:2px;background:linear-gradient(90deg,#00ff59 0px,#00ff59 6px,#68ff5b 39px,#d0ff5c 66px,#f8ff5d 75px,#fff85a 78px,#ffc147 93px,#ff8d35 114px,#ff5e25 144px,#ff3516 189px,#ff110a 261px,#ff0003 326px)"></i><i style="top:36px;height:2px;background:linear-gradient(90deg,#00ff5f 0px,#00ff5f 6px,#5dff61 36px,#c4ff63 63px,#f9ff64 75px,#ffea5d 81px,#ffb749 96px,#ff8637 117px,#ff5a27 147px,#ff3218 192px,#ff100b 264px,#ff0005 326px)"></i><i style="top:38px;height:2px;background:linear-gradient(90deg,#00ff65 0px,#00ff65 6px,#52ff67 33px,#b8ff6a 60px,#faff6c 75px,#ffe963 81px,#ffb64f 96px,#ff853c 117px,#ff592a 147px,#ff321b 192px,#ff0f0d 264px,#ff0006 326px)"></i><i style="top:40px;height:2px;background:linear-gradient(90deg,#00ff6a 0px,#00ff6b 6px,#48ff6e 30px,#acff71 57px,#fbff74 75px,#ffdd65 84px,#ffa54e 102px,#ff753a 126px,#ff4927 162px,#ff2317 216px,#ff020a 306px,#ff0008 326px)"></i><i style="top:42px;height:2px;background:linear-gradient(90deg,#00ff70 0px,#00ff71 6px,#20ff73 18px,#88ff77 48px,#edff7b 72px,#fcff7c 75px,#ffbd5e 93px,#ff8947 114px,#ff5b33 144px,#ff3221 189px,#ff0f11 261px,#ff0009 326px)"></i><i style="top:44px;height:2px;background:linear-gradient(90deg,#00ff76 0px,#04ff78 9px,#66ff7c 39px,#d3ff82 66px,#fcff84 75px,#ffbc64 93px,#ff884c 114px,#ff5a36 144px,#ff3223 189px,#ff0f13 261px,#ff000b 324px,#ff000b 326px)"></i><i style="top:46px;height:2px;background:linear-gradient(90deg,#00ff7c 0px,#03ff7e 9px,#66ff83 39px,#d3ff89 66px,#fdff8c 75px,#ffc46f 90px,#ff9457 108px,#ff6540 135px,#ff3c2c 174px,#ff171a 237px,#ff000d 318px,#ff000c 326px)"></i><i style="top:48px;height:2px;background:linear-gradient(90deg,#00ff83 0px,#02ff84 9px,#66ff8a 39px,#d4ff91 66px,#feff94 75px,#ffc375 90px,#ff935c 108px,#ff6444 135px,#ff3b2f 174px,#ff171c 237px,#ff000f 315px,#ff000e 326px)"></i><i style="top:50px;height:2px;background:linear-gradient(90deg,#00ff89 0px,#02ff8b 9px,#65ff92 39px,#d4ff99 66px,#ffff9c 75px,#ffc27b 90px,#ff9261 108px,#ff6348 135px,#ff3a32 174px,#ff161e 237px,#ff0011 312px,#ff000f 326px)"></i><i style="top:52px;height:2px;background:linear-gradient(90deg,#00ff8f 0px,#01ff91 9px,#65ff99 39px,#d5ffa2 66px,#fffea4 75px,#ffcc88 87px,#ff986a 105px,#ff6b50 129px,#ff4139 165px,#ff1c24 222px,#ff0013 306px,#ff0011 326px)"></i><i style="top:54px;height:2px;background:linear-gradient(90deg,#00ff96 0px,#00ff98 9px,#65ffa0 39px,#c8ffa9 63px,#fffdac 75px,#ffcb8e 87px,#ff976f 105px,#ff6a55 129px,#ff403c 165px,#ff1b26 222px,#ff0015 306px,#ff0012 326px)"></i><i style="top:56px;height:2px;background:linear-gradient(90deg,#00ff9c 0px,#00ff9f 9px,#59ffa7 36px,#c8ffb1 63px,#fffcb4 75px,#ffca95 87px,#ff9675 105px,#ff6959 129px,#ff403f 165px,#ff1b28 222px,#ff0017 303px,#ff0014 326px)"></i><i style="top:58px;height:2px;background:linear-gradient(90deg,#00ffa3 0px,#00ffa5 9px,#43ffac 30px,#aeffb7 57px,#f4ffbe 72px,#fffbbd 75px,#ffc99c 87px,#ff957a 105px,#ff685d 129px,#ff3f42 165px,#ff1a2b 222px,#ff0019 303px,#ff0015 326px)"></i><i style="top:60px;height:2px;background:linear-gradient(90deg,#00ffa9 0px,#00ffac 9px,#23ffb0 21px,#87ffbb 48px,#f5ffc7 72px,#fffac5 75px,#ffc8a3 87px,#ff9480 105px,#ff6761 129px,#ff3e46 165px,#ff1a2d 222px,#ff001b 300px,#ff0017 326px)"></i><i style="top:62px;height:2px;background:linear-gradient(90deg,#00ffb0 0px,#00ffb3 9px,#0effb5 15px,#6fffc1 42px,#d8ffcd 66px,#f6ffd0 72px,#fff9cd 75px,#ffc7aa 87px,#ff9385 105px,#ff6666 129px,#ff3d49 165px,#ff192f 222px,#ff001d 300px,#ff0018 326px)"></i><i style="top:64px;height:2px;background:linear-gradient(90deg,#00ffb7 0px,#04ffbb 12px,#63ffc7 39px,#caffd4 63px,#f6ffda 72px,#fff8d6 75px,#ffc5b1 87px,#ff928b 105px,#ff656a 129px,#ff3c4c 165px,#ff1832 222px,#ff001f 297px,#ff001a 326px)"></i><i style="top:66px;height:2px;background:linear-gradient(90deg,#00ffbe 0px,#03ffc3 12px,#62ffcf 39px,#caffdd 63px,#f7ffe3 72px,#fff7de 75px,#ffc4b8 87px,#ff9190 105px,#ff646e 129px,#ff3c4f 165px,#ff1834 222px,#ff0020 297px,#ff001b 326px)"></i><i style="top:68px;height:2px;background:linear-gradient(90deg,#00ffc5 0px,#02ffca 12px,#62ffd8 39px,#cbffe7 63px,#f8ffed 72px,#fff6e7 75px,#ffc3bf 87px,#ff9096 105px,#ff6373 129px,#ff3b53 165px,#ff1736 222px,#ff0023 294px,#ff001d 326px)"></i><i style="top:70px;height:2px;background:linear-gradient(90deg,#00ffcc 0px,#01ffd2 12px,#62ffe0 39px,#cbfff0 63px,#f9fff7 72px,#ffe7e4 78px,#ffaeb6 93px,#ff7c8c 114px,#ff4f67 144px,#ff2847 189px,#ff062b 264px,#ff0022 306px,#ff001e 326px)"></i><i style="top:72px;height:2px;background:linear-gradient(90deg,#00ffd3 0px,#00ffd9 12px,#61ffe9 39px,#ccfffa 63px,#f8fdff 72px,#fff4f8 75px,#ffc1cd 87px,#ff8ea1 105px,#ff617b 129px,#ff3959 165px,#ff163b 222px,#ff0027 291px,#ff0020 326px)"></i><i style="top:74px;height:2px;background:linear-gradient(90deg,#00ffdb 0px,#00ffe1 12px,#55ffef 36px,#bcfdff 60px,#fdf1ff 75px,#ffb6cb 90px,#ff86a1 108px,#ff5878 135px,#ff3156 174px,#ff0f38 237px,#ff0029 291px,#ff0022 326px)"></i><i style="top:76px;height:2px;background:linear-gradient(90deg,#00ffe2 0px,#00ffe9 12px,#49fff6 33px,#91fbff 51px,#ffe3fd 78px,#ffabca 93px,#ff789b 114px,#ff4c73 144px,#ff2650 189px,#ff0531 264px,#ff0026 312px,#ff0023 326px)"></i><i style="top:78px;height:2px;background:linear-gradient(90deg,#00ffea 0px,#00fff1 12px,#26fff8 24px,#5ffbff 39px,#f9ddff 78px,#ffd5f9 81px,#ffa1c8 96px,#ff729b 117px,#ff4873 147px,#ff224f 195px,#ff0131 273px,#ff0025 326px)"></i><i style="top:80px;height:2px;background:linear-gradient(90deg,#00fff1 0px,#00fff9 12px,#10fffd 18px,#cddcff 69px,#fdd2ff 81px,#ff98c7 99px,#ff6c9b 120px,#ff4171 153px,#ff1c4d 204px,#ff0031 279px,#ff0026 326px)"></i><i style="top:82px;height:2px;background:linear-gradient(90deg,#00fff9 0px,#00fdff 12px,#0ff9ff 18px,#c6d4ff 69px,#ffc7fd 84px,#ff97cd 99px,#ff6ba0 120px,#ff4075 153px,#ff1b50 204px,#ff0034 276px,#ff0028 326px)"></i><i style="top:84px;height:2px;background:linear-gradient(90deg,#00fdff 0px,#03f3ff 15px,#c0cdff 69px,#f9c1ff 84px,#ffbafa 87px,#ff87c4 105px,#ff5b96 129px,#ff346d 165px,#ff1249 222px,#ff0034 282px,#ff0029 326px)"></i><i style="top:86px;height:2px;background:linear-gradient(90deg,#00f6ff 0px,#02ecff 15px,#bac5ff 69px,#fdb8ff 87px,#ff7fc3 108px,#ff5696 132px,#ff316e 168px,#ff104a 225px,#ff0037 279px,#ff002b 326px)"></i><i style="top:88px;height:2px;background:linear-gradient(90deg,#00eeff 0px,#01e5ff 15px,#bfbdff 72px,#ffaefe 90px,#ff7ec8 108px,#ff559b 132px,#ff3071 168px,#ff0f4d 225px,#ff0039 276px,#ff002d 326px)"></i><i style="top:90px;height:2px;background:linear-gradient(90deg,#00e7ff 0px,#00deff 15px,#bab6ff 72px,#f9a9ff 90px,#ff9af0 96px,#ff71c0 114px,#ff4992 141px,#ff266b 180px,#ff0747 243px,#ff0039 282px,#ff002e 326px)"></i><i style="top:92px;height:2px;background:linear-gradient(90deg,#00e1ff 0px,#00d7ff 15px,#aab2ff 69px,#fda1ff 93px,#ff70c6 114px,#ff4897 141px,#ff266e 180px,#ff0749 243px,#ff003c 279px,#ff0030 326px)"></i><i style="top:94px;height:2px;background:linear-gradient(90deg,#00daff 0px,#00d1ff 15px,#92b1ff 63px,#ff98fe 96px,#ff6fcb 114px,#ff479b 141px,#ff2571 180px,#ff074d 240px,#ff003f 276px,#ff0031 326px)"></i><i style="top:96px;height:2px;background:linear-gradient(90deg,#00d4ff 0px,#00cbff 15px,#71b1ff 54px,#f994ff 96px,#ff87f1 102px,#ff5ebd 123px,#ff3a8f 153px,#ff1966 198px,#ff0045 264px,#ff0033 326px)"></i><i style="top:98px;height:2px;background:linear-gradient(90deg,#00ceff 0px,#00c5ff 15px,#27bcff 30px,#df93ff 90px,#fd8cff 99px,#ff5dc2 123px,#ff3993 153px,#ff1869 198px,#ff0047 264px,#ff0034 326px)"></i><i style="top:100px;height:2px;background:linear-gradient(90deg,#00c9ff 0px,#00c0ff 15px,#15baff 24px,#d090ff 87px,#ff85fe 102px,#ff5cc8 123px,#ff3b9b 150px,#ff1b70 192px,#ff004c 258px,#ff0036 326px)"></i><i style="top:102px;height:2px;background:linear-gradient(90deg,#00c3ff 0px,#03b8ff 18px,#c18eff 84px,#fa81ff 102px,#ff76f2 108px,#ff52c0 129px,#ff3193 159px,#ff146a 204px,#ff004c 261px,#ff0038 326px)"></i><i style="top:104px;height:2px;background:linear-gradient(90deg,#00beff 0px,#02b3ff 18px,#bc89ff 84px,#fd7aff 105px,#ff51c5 129px,#ff3097 159px,#ff136d 204px,#ff004e 261px,#ff0039 326px)"></i><i style="top:106px;height:2px;background:linear-gradient(90deg,#00b9ff 0px,#01aeff 18px,#b885ff 84px,#ff74fe 108px,#ff50ca 129px,#ff309b 159px,#ff1270 204px,#ff0052 258px,#ff003b 326px)"></i><i style="top:108px;height:2px;background:linear-gradient(90deg,#00b4ff 0px,#00aaff 18px,#bc7fff 87px,#fa70ff 108px,#ff67f3 114px,#ff44be 138px,#ff2590 171px,#ff0a67 222px,#ff0053 261px,#ff003c 326px)"></i><i style="top:110px;height:2px;background:linear-gradient(90deg,#00b0ff 0px,#00a5ff 18px,#af7dff 84px,#fd6aff 111px,#ff43c2 138px,#ff2494 171px,#ff0a6b 219px,#ff0056 258px,#ff003e 326px)"></i><i style="top:112px;height:2px;background:linear-gradient(90deg,#00abff 0px,#00a1ff 18px,#a27bff 81px,#ff65fe 114px,#ff45cd 135px,#ff289e 165px,#ff0d74 210px,#ff005b 252px,#ff0040 326px)"></i><i style="top:114px;height:2px;background:linear-gradient(90deg,#00a7ff 0px,#009dff 18px,#8e7bff 75px,#fa61ff 114px,#ff59f4 120px,#ff3ac1 144px,#ff1e94 177px,#ff056a 228px,#ff0057 264px,#ff0041 326px)"></i><i style="top:116px;height:2px;background:linear-gradient(90deg,#00a3ff 0px,#0099ff 18px,#6c7eff 63px,#fd5cff 117px,#ff39c5 144px,#ff1e97 177px,#ff046d 228px,#ff0057 270px,#ff0043 326px)"></i><i style="top:118px;height:2px;background:linear-gradient(90deg,#009eff 0px,#0393ff 21px,#be66ff 96px,#ff57ff 120px,#ff38c9 144px,#ff1d9a 177px,#ff0571 225px,#ff005c 264px,#ff0045 326px)"></i><i style="top:120px;height:2px;background:linear-gradient(90deg,#009bff 0px,#038fff 21px,#ba63ff 96px,#ff51fc 123px,#ff34c8 147px,#ff1a9a 180px,#ff0270 231px,#ff004c 309px,#ff0046 326px)"></i><i style="top:122px;height:2px;background:linear-gradient(90deg,#0097ff 0px,#028cff 21px,#be5eff 99px,#fd4fff 123px,#ff2dc2 153px,#ff1494 189px,#ff006d 240px,#ff0048 324px,#ff0048 326px)"></i><i style="top:124px;height:2px;background:linear-gradient(90deg,#0093ff 0px,#0188ff 21px,#ba5bff 99px,#ff4aff 126px,#ff2fcb 150px,#ff159a 186px,#ff0071 237px,#ff004c 318px,#ff0049 326px)"></i><i style="top:126px;height:2px;background:linear-gradient(90deg,#0090ff 0px,#0085ff 21px,#bd57ff 102px,#ff45fc 129px,#ff2bca 153px,#ff129a 189px,#ff0073 237px,#ff004e 318px,#ff004b 326px)"></i><i style="top:128px;height:2px;background:linear-gradient(90deg,#008cff 0px,#0081ff 21px,#b256ff 99px,#fd43ff 129px,#ff25c5 159px,#ff0d94 198px,#ff0075 237px,#ff0050 315px,#ff004d 326px)"></i><i style="top:130px;height:2px;background:linear-gradient(90deg,#0089ff 0px,#007eff 21px,#a755ff 96px,#ff3fff 132px,#ff24c8 159px,#ff0d9a 195px,#ff007a 234px,#ff0054 309px,#ff004e 326px)"></i><i style="top:132px;height:2px;background:linear-gradient(90deg,#0086ff 0px,#007bff 21px,#9656ff 90px,#ff3afc 135px,#ff21c8 162px,#ff0a97 201px,#ff007c 234px,#ff0056 309px,#ff0050 326px)"></i><i style="top:134px;height:2px;background:linear-gradient(90deg,#0082ff 0px,#0078ff 21px,#8556ff 84px,#fd39ff 135px,#ff1cc2 168px,#ff0694 207px,#ff007d 237px,#ff0057 312px,#ff0052 326px)"></i><i style="top:136px;height:2px;background:linear-gradient(90deg,#007fff 0px,#0373ff 24px,#c045ff 111px,#ff35ff 138px,#ff1dca 165px,#ff079a 204px,#ff0081 234px,#ff005a 309px,#ff0053 326px)"></i><i style="top:138px;height:2px;background:linear-gradient(90deg,#007cff 0px,#0271ff 24px,#bc42ff 111px,#ff30fd 141px,#ff1aca 168px,#ff059a 207px,#ff0081 237px,#ff005a 312px,#ff0055 326px)"></i><i style="top:140px;height:2px;background:linear-gradient(90deg,#007aff 0px,#026eff 24px,#bf3eff 114px,#fd2fff 141px,#ff15c4 174px,#ff0095 216px,#ff006b 279px,#ff0057 326px)"></i><i style="top:142px;height:2px;background:linear-gradient(90deg,#0077ff 0px,#016bff 24px,#bb3cff 114px,#ff2bff 144px,#ff16cc 171px,#ff029d 210px,#ff0073 267px,#ff0058 326px)"></i><i style="top:144px;height:2px;background:linear-gradient(90deg,#0074ff 0px,#0069ff 24px,#bf39ff 117px,#ff27fd 147px,#ff11c7 177px,#ff0097 219px,#ff006d 282px,#ff005a 326px)"></i><i style="top:146px;height:2px;background:linear-gradient(90deg,#0071ff 0px,#0066ff 24px,#bb37ff 117px,#fd26ff 147px,#ff0dc2 183px,#ff009a 219px,#ff0071 279px,#ff005c 326px)"></i><i style="top:148px;height:2px;background:linear-gradient(90deg,#006fff 0px,#0064ff 24px,#ab38ff 111px,#ff23ff 150px,#ff0eca 180px,#ff00a0 216px,#ff0074 276px,#ff005d 326px)"></i><i style="top:150px;height:2px;background:linear-gradient(90deg,#006cff 0px,#0061ff 24px,#a238ff 108px,#ff1ffd 153px,#ff0bc9 183px,#ff00a5 213px,#ff007a 270px,#ff005f 326px)"></i><i style="top:152px;height:2px;background:linear-gradient(90deg,#006aff 0px,#005fff 24px,#9339ff 102px,#fd1eff 153px,#ff07c4 189px,#ff00a5 216px,#ff007a 273px,#ff0061 326px)"></i><i style="top:154px;height:2px;background:linear-gradient(90deg,#0068ff 0px,#035bff 27px,#c02bff 126px,#ff1bff 156px,#ff08cb 186px,#ff00ab 213px,#ff007e 270px,#ff0062 326px)"></i><i style="top:156px;height:2px;background:linear-gradient(90deg,#0065ff 0px,#0259ff 27px,#bd29ff 126px,#ff17fd 159px,#ff06cb 189px,#ff00ab 216px,#ff007e 273px,#ff0064 326px)"></i><i style="top:158px;height:2px;background:linear-gradient(90deg,#0063ff 0px,#0257ff 27px,#c026ff 129px,#fd16ff 159px,#ff01c2 198px,#ff0093 246px,#ff0069 318px,#ff0066 326px)"></i><i style="top:160px;height:2px;background:linear-gradient(90deg,#0061ff 0px,#0155ff 27px,#bd24ff 129px,#ff13ff 162px,#ff01c9 195px,#ff009a 240px,#ff0070 306px,#ff0067 326px)"></i><i style="top:162px;height:2px;background:linear-gradient(90deg,#005fff 0px,#0153ff 27px,#ba23ff 129px,#ff10fd 165px,#ff00c8 198px,#ff0098 246px,#ff006e 315px,#ff0069 326px)"></i><i style="top:164px;height:2px;background:linear-gradient(90deg,#005dff 0px,#0051ff 27px,#bc20ff 132px,#fd0fff 165px,#ff00cb 198px,#ff009c 243px,#ff0071 312px,#ff006b 326px)"></i><i style="top:166px;height:2px;background:linear-gradient(90deg,#005bff 0px,#004fff 27px,#b420ff 129px,#ff0cff 168px,#ff00cf 198px,#ff009f 243px,#ff0074 309px,#ff006d 326px)"></i><i style="top:168px;height:2px;background:linear-gradient(90deg,#0059ff 0px,#004dff 27px,#a621ff 123px,#ff09fd 171px,#ff00d2 198px,#ff00a1 243px,#ff0076 309px,#ff006e 326px)"></i><i style="top:170px;height:2px;background:linear-gradient(90deg,#0057ff 0px,#034aff 30px,#bf19ff 138px,#fd08ff 171px,#ff00d9 195px,#ff00a9 237px,#ff007d 300px,#ff0070 326px)"></i><i style="top:172px;height:2px;background:linear-gradient(90deg,#0055ff 0px,#0348ff 30px,#c116ff 141px,#ff06ff 174px,#ff00d8 198px,#ff00a6 243px,#ff007a 309px,#ff0072 326px)"></i><i style="top:174px;height:2px;background:linear-gradient(90deg,#0053ff 0px,#0246ff 30px,#be15ff 141px,#ff03fe 177px,#ff00c8 213px,#ff0098 264px,#ff0073 326px)"></i><i style="top:176px;height:2px;background:linear-gradient(90deg,#0051ff 0px,#0245ff 30px,#bb14ff 141px,#ff01fc 180px,#ff00c7 216px,#ff0098 267px,#ff0075 326px)"></i><i style="top:178px;height:2px;background:linear-gradient(90deg,#004fff 0px,#0143ff 30px,#be11ff 144px,#fe00ff 180px,#ff00c6 219px,#ff0098 270px,#ff0077 326px)"></i><i style="top:180px;height:2px;background:linear-gradient(90deg,#004eff 0px,#0141ff 30px,#bb10ff 144px,#ff00fe 183px,#ff00c9 219px,#ff009a 270px,#ff0079 326px)"></i><i style="top:182px;height:2px;background:linear-gradient(90deg,#004cff 0px,#0040ff 30px,#bd0dff 147px,#fd00ff 183px,#ff00c2 228px,#ff0094 282px,#ff007a 326px)"></i><i style="top:184px;height:2px;background:linear-gradient(90deg,#004aff 0px,#003eff 30px,#b60eff 144px,#f400ff 180px,#fe00ff 186px,#ff00c8 225px,#ff0098 279px,#ff007c 326px)"></i><i style="top:186px;height:2px;background:linear-gradient(90deg,#0049ff 0px,#003dff 30px,#ae0eff 141px,#f000ff 180px,#ff00fe 189px,#ff00c7 228px,#ff0098 282px,#ff007e 326px)"></i><i style="top:188px;height:2px;background:linear-gradient(90deg,#0047ff 0px,#033aff 33px,#bf08ff 153px,#ed00ff 180px,#ff00fc 192px,#ff00c7 231px,#ff0098 285px,#ff0080 326px)"></i><i style="top:190px;height:2px;background:linear-gradient(90deg,#0045ff 0px,#0339ff 33px,#bd07ff 153px,#ea00ff 180px,#fe00ff 192px,#ff00c6 234px,#ff0096 291px,#ff0081 326px)"></i><i style="top:192px;height:2px;background:linear-gradient(90deg,#0044ff 0px,#0237ff 33px,#bf04ff 156px,#fb00ff 192px,#ff00f4 201px,#ff00bf 243px,#ff0090 303px,#ff0083 326px)"></i><i style="top:194px;height:2px;background:linear-gradient(90deg,#0042ff 0px,#0236ff 33px,#bc03ff 156px,#ff00fc 198px,#ff00c8 237px,#ff0098 294px,#ff0085 326px)"></i><i style="top:196px;height:2px;background:linear-gradient(90deg,#0041ff 0px,#0134ff 33px,#bf01ff 159px,#fe00ff 198px,#ff00c8 240px,#ff0098 297px,#ff0087 326px)"></i><i style="top:198px;height:2px;background:linear-gradient(90deg,#003fff 0px,#0133ff 33px,#bc00ff 159px,#ff00fe 201px,#ff00ca 240px,#ff009a 297px,#ff0088 326px)"></i><i style="top:200px;height:2px;background:linear-gradient(90deg,#003eff 0px,#0032ff 33px,#be00ff 162px,#ff00fd 204px,#ff00c6 246px,#ff0096 306px,#ff008a 326px)"></i><i style="top:202px;height:2px;background:linear-gradient(90deg,#003dff 0px,#0031ff 33px,#b700ff 159px,#fe00ff 204px,#ff00c6 249px,#ff0096 309px,#ff008c 326px)"></i><i style="top:204px;height:2px;background:linear-gradient(90deg,#003bff 0px,#002fff 33px,#b000ff 156px,#ff00fe 207px,#ff00c8 249px,#ff0098 309px,#ff008e 326px)"></i><i style="top:206px;height:2px;background:linear-gradient(90deg,#003aff 0px,#032dff 36px,#b200ff 159px,#ff00fd 210px,#ff00c8 252px,#ff0098 312px,#ff0090 326px)"></i><i style="top:208px;height:2px;background:linear-gradient(90deg,#0039ff 0px,#022cff 36px,#ac00ff 156px,#fe00ff 210px,#ff00c7 255px,#ff0098 315px,#ff0091 326px)"></i><i style="top:210px;height:2px;background:linear-gradient(90deg,#0037ff 0px,#022bff 36px,#a900ff 156px,#ff00fe 213px,#ff00ca 255px,#ff009a 315px,#ff0093 326px)"></i><i style="top:212px;height:2px;background:linear-gradient(90deg,#0036ff 0px,#0229ff 36px,#a300ff 153px,#ff00fd 216px,#ff00c9 258px,#ff009a 318px,#ff0095 326px)"></i><i style="top:214px;height:2px;background:linear-gradient(90deg,#0035ff 0px,#0128ff 36px,#9c00ff 150px,#fe00ff 216px,#ff00c6 264px,#ff0097 326px)"></i><i style="top:216px;height:2px;background:linear-gradient(90deg,#0034ff 0px,#0127ff 36px,#9a00ff 150px,#ff00fe 219px,#ff00c8 264px,#ff0099 326px)"></i><i style="top:218px;height:2px;background:linear-gradient(90deg,#0033ff 0px,#0026ff 36px,#9400ff 147px,#ff00fd 222px,#ff00c7 267px,#ff009a 326px)"></i><i style="top:220px;height:2px;background:linear-gradient(90deg,#0031ff 0px,#0025ff 36px,#9200ff 147px,#fe00ff 222px,#ff00c7 270px,#ff009c 326px)"></i><i style="top:222px;height:2px;background:linear-gradient(90deg,#0030ff 0px,#0323ff 39px,#8d00ff 144px,#ff00fe 225px,#ff00c9 270px,#ff009e 326px)"></i><i style="top:224px;height:2px;background:linear-gradient(90deg,#002fff 0px,#0322ff 39px,#8700ff 141px,#ff00fd 228px,#ff00c9 273px,#ff00a0 326px)"></i><i style="top:226px;height:2px;background:linear-gradient(90deg,#002eff 0px,#0221ff 39px,#8500ff 141px,#fe00ff 228px,#ff00c5 279px,#ff00a2 326px)"></i><i style="top:228px;height:2px;background:linear-gradient(90deg,#002dff 0px,#0220ff 39px,#7f00ff 138px,#ff00ff 231px,#ff00ca 276px,#ff00a3 326px)"></i><i style="top:230px;height:2px;background:linear-gradient(90deg,#002cff 0px,#021fff 39px,#7e00ff 138px,#ff00fd 234px,#ff00c7 282px,#ff00a5 326px)"></i><i style="top:232px;height:2px;background:linear-gradient(90deg,#002bff 0px,#011eff 39px,#7800ff 135px,#fe00ff 234px,#ff00c7 285px,#ff00a7 326px)"></i><i style="top:234px;height:2px;background:linear-gradient(90deg,#002aff 0px,#011dff 39px,#7300ff 132px,#ff00ff 237px,#ff00c9 285px,#ff00a9 326px)"></i><i style="top:236px;height:2px;background:linear-gradient(90deg,#0029ff 0px,#001cff 39px,#7200ff 132px,#ff00fd 240px,#ff00c8 288px,#ff00ab 326px)"></i><i style="top:238px;height:2px;background:linear-gradient(90deg,#0028ff 0px,#001bff 39px,#6c00ff 129px,#ff00fc 243px,#ff00c8 291px,#ff00ad 326px)"></i><i style="top:240px;height:2px;background:linear-gradient(90deg,#0027ff 0px,#031aff 42px,#6b00ff 129px,#ff00ff 243px,#ff00ca 291px,#ff00af 326px)"></i><i style="top:242px;height:2px;background:linear-gradient(90deg,#0026ff 0px,#0319ff 42px,#6600ff 126px,#ff00fd 246px,#ff00c9 294px,#ff00b0 326px)"></i><i style="top:244px;height:2px;background:linear-gradient(90deg,#0025ff 0px,#0218ff 42px,#6100ff 123px,#ff00fc 249px,#ff00c6 300px,#ff00b2 326px)"></i><i style="top:246px;height:2px;background:linear-gradient(90deg,#0024ff 0px,#0217ff 42px,#6000ff 123px,#ff00ff 249px,#ff00c8 300px,#ff00b4 326px)"></i><i style="top:248px;height:2px;background:linear-gradient(90deg,#0023ff 0px,#0216ff 42px,#5b00ff 120px,#ff00fd 252px,#ff00c8 303px,#ff00b6 326px)"></i><i style="top:250px;height:2px;background:linear-gradient(90deg,#0022ff 0px,#0115ff 42px,#5700ff 117px,#ff00fc 255px,#ff00c7 306px,#ff00b8 326px)"></i><i style="top:252px;height:2px;background:linear-gradient(90deg,#0021ff 0px,#0115ff 42px,#5600ff 117px,#ff00ff 255px,#ff00c9 306px,#ff00ba 326px)"></i><i style="top:254px;height:2px;background:linear-gradient(90deg,#0020ff 0px,#0014ff 42px,#5100ff 114px,#ff00fe 258px,#ff00c9 309px,#ff00bc 326px)"></i><i style="top:256px;height:2px;background:linear-gradient(90deg,#0020ff 0px,#0013ff 42px,#5000ff 114px,#ff00fc 261px,#ff00c6 315px,#ff00be 326px)"></i><i style="top:258px;height:2px;background:linear-gradient(90deg,#001fff 0px,#0311ff 45px,#4c00ff 111px,#ff00ff 261px,#ff00ca 312px,#ff00bf 326px)"></i><i style="top:260px;height:2px;background:linear-gradient(90deg,#001eff 0px,#0311ff 45px,#4700ff 108px,#ff00fe 264px,#ff00c8 318px,#ff00c1 326px)"></i><i style="top:262px;height:2px;background:linear-gradient(90deg,#001dff 0px,#0210ff 45px,#4600ff 108px,#ff00fc 267px,#ff00c7 321px,#ff00c3 326px)"></i><i style="top:264px;height:2px;background:linear-gradient(90deg,#001cff 0px,#020fff 45px,#4600ff 108px,#ff00ff 267px,#ff00c9 321px,#ff00c5 326px)"></i><i style="top:266px;height:2px;background:linear-gradient(90deg,#001cff 0px,#010eff 45px,#4100ff 105px,#ff00fe 270px,#ff00c9 324px,#ff00c7 326px)"></i><i style="top:268px;height:2px;background:linear-gradient(90deg,#001bff 0px,#010eff 45px,#3d00ff 102px,#fa00ff 267px,#ff00f2 282px,#ff00c9 326px)"></i><i style="top:270px;height:2px;background:linear-gradient(90deg,#001aff 0px,#010dff 45px,#3c00ff 102px,#fb00ff 270px,#ff00f1 285px,#ff00cb 326px)"></i><i style="top:272px;height:2px;background:linear-gradient(90deg,#0019ff 0px,#000cff 45px,#3800ff 99px,#f500ff 267px,#ff00fa 279px,#ff00cd 326px)"></i><i style="top:274px;height:2px;background:linear-gradient(90deg,#0018ff 0px,#030bff 48px,#3800ff 99px,#f700ff 270px,#ff00f9 282px,#ff00cf 326px)"></i><i style="top:276px;height:2px;background:linear-gradient(90deg,#0018ff 0px,#030aff 48px,#3400ff 96px,#f100ff 267px,#ff00fc 282px,#ff00d1 326px)"></i><i style="top:278px;height:2px;background:linear-gradient(90deg,#0017ff 0px,#020aff 48px,#3300ff 96px,#f200ff 270px,#ff00fa 285px,#ff00d3 326px)"></i><i style="top:280px;height:2px;background:linear-gradient(90deg,#0016ff 0px,#0209ff 48px,#3200ff 96px,#f000ff 270px,#ff00fd 285px,#ff00d5 326px)"></i><i style="top:282px;height:2px;background:linear-gradient(90deg,#0016ff 0px,#0208ff 48px,#2f00ff 93px,#ee00ff 270px,#ff00fc 288px,#ff00d6 326px)"></i><i style="top:284px;height:2px;background:linear-gradient(90deg,#0015ff 0px,#0108ff 48px,#2e00ff 93px,#eb00ff 270px,#ff00fe 288px,#ff00d8 326px)"></i><i style="top:286px;height:2px;background:linear-gradient(90deg,#0014ff 0px,#0107ff 48px,#2d00ff 93px,#ed00ff 273px,#ff00fd 291px,#ff00da 326px)"></i><i style="top:288px;height:2px;background:linear-gradient(90deg,#0014ff 0px,#0107ff 48px,#2a00ff 90px,#e700ff 270px,#ff00fc 294px,#ff00dc 326px)"></i><i style="top:290px;height:2px;background:linear-gradient(90deg,#0013ff 0px,#0305ff 51px,#2f00ff 96px,#ec00ff 276px,#ff00fe 294px,#ff00de 326px)"></i><i style="top:292px;height:2px;background:linear-gradient(90deg,#0012ff 0px,#0305ff 51px,#3400ff 102px,#f400ff 285px,#ff00fd 297px,#ff00e0 326px)"></i><i style="top:294px;height:2px;background:linear-gradient(90deg,#0012ff 0px,#0304ff 51px,#3c00ff 111px,#fb00ff 294px,#ff00e4 324px,#ff00e2 326px)"></i><i style="top:296px;height:2px;background:linear-gradient(90deg,#0011ff 0px,#0203ff 51px,#7a00ff 174px,#ff00fe 300px,#ff00e4 326px)"></i><i style="top:298px;height:2px;background:linear-gradient(90deg,#0010ff 0px,#0203ff 51px,#c000ff 243px,#ff00fd 303px,#ff00e6 326px)"></i><i style="top:300px;height:2px;background:linear-gradient(90deg,#0010ff 0px,#0202ff 51px,#bf00ff 243px,#ff00fc 306px,#ff00e8 326px)"></i><i style="top:302px;height:2px;background:linear-gradient(90deg,#000fff 0px,#0102ff 51px,#bd00ff 243px,#ff00fe 306px,#ff00ea 326px)"></i><i style="top:304px;height:2px;background:linear-gradient(90deg,#000eff 0px,#0101ff 51px,#be00ff 246px,#ff00fd 309px,#ff00ec 326px)"></i><i style="top:306px;height:2px;background:linear-gradient(90deg,#000eff 0px,#0101ff 51px,#bd00ff 246px,#ff00fc 312px,#ff00ee 326px)"></i><i style="top:308px;height:2px;background:linear-gradient(90deg,#000dff 0px,#0300ff 54px,#c100ff 252px,#ff00fe 312px,#ff00f0 326px)"></i><i style="top:310px;height:1px;background:linear-gradient(90deg,#000dff 0px,#0300ff 54px,#c000ff 252px,#ff00fd 315px,#ff00f2 326px)"></i></div>
<div style="left:951.90px;top:512.50px;width:1.20px;height:6.00px;background:#9e9e9e;"></div>
<span style="left:948.89px;top:521.70px;font-size:13px;line-height:13px;color:#cdcdcd;">0</span>
<div style="left:1001.80px;top:512.50px;width:1.20px;height:6.00px;background:#9e9e9e;"></div>
<span style="left:989.76px;top:521.70px;font-size:13px;line-height:13px;color:#cdcdcd;">0,05</span>
<div style="left:1051.70px;top:512.50px;width:1.20px;height:6.00px;background:#9e9e9e;"></div>
<span style="left:1043.26px;top:521.70px;font-size:13px;line-height:13px;color:#cdcdcd;">0,1</span>
<div style="left:1101.60px;top:512.50px;width:1.20px;height:6.00px;background:#9e9e9e;"></div>
<span style="left:1089.56px;top:521.70px;font-size:13px;line-height:13px;color:#cdcdcd;">0,15</span>
<div style="left:1151.50px;top:512.50px;width:1.20px;height:6.00px;background:#9e9e9e;"></div>
<span style="left:1143.06px;top:521.70px;font-size:13px;line-height:13px;color:#cdcdcd;">0,2</span>
<div style="left:1201.40px;top:512.50px;width:1.20px;height:6.00px;background:#9e9e9e;"></div>
<span style="left:1189.36px;top:521.70px;font-size:13px;line-height:13px;color:#cdcdcd;">0,25</span>
<div style="left:1251.30px;top:512.50px;width:1.20px;height:6.00px;background:#9e9e9e;"></div>
<span style="left:1242.87px;top:521.70px;font-size:13px;line-height:13px;color:#cdcdcd;">0,3</span>
<div style="left:1301.20px;top:512.50px;width:1.20px;height:6.00px;background:#9e9e9e;"></div>
<span style="left:1289.16px;top:521.70px;font-size:13px;line-height:13px;color:#cdcdcd;">0,35</span>
<div style="left:1351.10px;top:512.50px;width:1.20px;height:6.00px;background:#9e9e9e;"></div>
<span style="left:1342.66px;top:521.70px;font-size:13px;line-height:13px;color:#cdcdcd;">0,4</span>
<div style="left:1401.00px;top:512.50px;width:1.20px;height:6.00px;background:#9e9e9e;"></div>
<span style="left:1388.96px;top:521.70px;font-size:13px;line-height:13px;color:#cdcdcd;">0,45</span>
<div style="left:1450.90px;top:512.50px;width:1.20px;height:6.00px;background:#9e9e9e;"></div>
<span style="left:1442.46px;top:521.70px;font-size:13px;line-height:13px;color:#cdcdcd;">0,5</span>
<div style="left:1500.80px;top:512.50px;width:1.20px;height:6.00px;background:#9e9e9e;"></div>
<span style="left:1488.76px;top:521.70px;font-size:13px;line-height:13px;color:#cdcdcd;">0,55</span>
<div style="left:946.50px;top:511.00px;width:5.50px;height:1.60px;background:#c4c4c4;"></div>
<span style="left:939.08px;top:506.60px;font-size:13px;line-height:13px;color:#cdcdcd;">0</span>
<div style="left:946.50px;top:472.70px;width:5.50px;height:1.60px;background:#c4c4c4;"></div>
<span style="left:921.01px;top:468.30px;font-size:13px;line-height:13px;color:#cdcdcd;">0,05</span>
<div style="left:946.50px;top:434.40px;width:5.50px;height:1.60px;background:#c4c4c4;"></div>
<span style="left:928.23px;top:430.00px;font-size:13px;line-height:13px;color:#cdcdcd;">0,1</span>
<div style="left:946.50px;top:396.10px;width:5.50px;height:1.60px;background:#c4c4c4;"></div>
<span style="left:921.01px;top:391.70px;font-size:13px;line-height:13px;color:#cdcdcd;">0,15</span>
<div style="left:946.50px;top:357.80px;width:5.50px;height:1.60px;background:#c4c4c4;"></div>
<span style="left:928.23px;top:353.40px;font-size:13px;line-height:13px;color:#cdcdcd;">0,2</span>
<div style="left:946.50px;top:319.50px;width:5.50px;height:1.60px;background:#c4c4c4;"></div>
<span style="left:921.01px;top:315.10px;font-size:13px;line-height:13px;color:#cdcdcd;">0,25</span>
<div style="left:946.50px;top:281.20px;width:5.50px;height:1.60px;background:#c4c4c4;"></div>
<span style="left:928.23px;top:276.80px;font-size:13px;line-height:13px;color:#cdcdcd;">0,3</span>
<div style="left:946.50px;top:242.90px;width:5.50px;height:1.60px;background:#c4c4c4;"></div>
<span style="left:921.01px;top:238.50px;font-size:13px;line-height:13px;color:#cdcdcd;">0,35</span>
<div style="left:946.50px;top:204.60px;width:5.50px;height:1.60px;background:#c4c4c4;"></div>
<span style="left:928.23px;top:200.20px;font-size:13px;line-height:13px;color:#cdcdcd;">0,4</span>
<div style="left:946.50px;top:166.30px;width:5.50px;height:1.60px;background:#c4c4c4;"></div>
<span style="left:921.01px;top:161.90px;font-size:13px;line-height:13px;color:#cdcdcd;">0,45</span>
<div style="left:946.50px;top:128.00px;width:5.50px;height:1.60px;background:#c4c4c4;"></div>
<span style="left:928.23px;top:123.60px;font-size:13px;line-height:13px;color:#cdcdcd;">0,5</span>
<div style="left:946.50px;top:89.70px;width:5.50px;height:1.60px;background:#c4c4c4;"></div>
<span style="left:921.01px;top:85.30px;font-size:13px;line-height:13px;color:#cdcdcd;">0,55</span>
<svg style="left:0;top:0" width="1560" height="849"><rect x="1069.5" y="72.0" width="13.5" height="13.5" fill="none" stroke="#f4f4f4" stroke-width="1.7"/><rect x="1149.2" y="80.0" width="13.5" height="13.5" fill="none" stroke="#f4f4f4" stroke-width="1.7"/><rect x="1129.5" y="87.0" width="13.5" height="13.5" fill="none" stroke="#f4f4f4" stroke-width="1.7"/><rect x="1092.8" y="95.2" width="13.5" height="13.5" fill="none" stroke="#f4f4f4" stroke-width="1.7"/><rect x="1174.0" y="84.0" width="13.5" height="13.5" fill="none" stroke="#f4f4f4" stroke-width="1.7"/><rect x="1127.0" y="108.2" width="13.5" height="13.5" fill="none" stroke="#f4f4f4" stroke-width="1.7"/><rect x="1204.0" y="90.0" width="13.5" height="13.5" fill="none" stroke="#f4f4f4" stroke-width="1.7"/><rect x="1244.0" y="95.0" width="13.5" height="13.5" fill="none" stroke="#f4f4f4" stroke-width="1.7"/><rect x="1395.2" y="103.2" width="13.5" height="13.5" fill="none" stroke="#f4f4f4" stroke-width="1.7"/><rect x="1320.2" y="122.0" width="13.5" height="13.5" fill="none" stroke="#f4f4f4" stroke-width="1.7"/><rect x="1262.0" y="132.8" width="13.5" height="13.5" fill="none" stroke="#f4f4f4" stroke-width="1.7"/><rect x="1098.8" y="137.0" width="13.5" height="13.5" fill="none" stroke="#f4f4f4" stroke-width="1.7"/><rect x="1084.0" y="155.0" width="13.5" height="13.5" fill="none" stroke="#f4f4f4" stroke-width="1.7"/><rect x="1089.0" y="184.0" width="13.5" height="13.5" fill="none" stroke="#f4f4f4" stroke-width="1.7"/><rect x="1120.8" y="181.5" width="13.5" height="13.5" fill="none" stroke="#f4f4f4" stroke-width="1.7"/><rect x="1140.0" y="187.0" width="13.5" height="13.5" fill="none" stroke="#f4f4f4" stroke-width="1.7"/><rect x="1232.0" y="177.0" width="13.5" height="13.5" fill="none" stroke="#f4f4f4" stroke-width="1.7"/><rect x="1173.2" y="203.8" width="13.5" height="13.5" fill="none" stroke="#f4f4f4" stroke-width="1.7"/><rect x="1123.2" y="229.5" width="13.5" height="13.5" fill="none" stroke="#f4f4f4" stroke-width="1.7"/><rect x="1122.8" y="279.6" width="13.5" height="13.5" fill="none" stroke="#f4f4f4" stroke-width="1.7"/><rect x="1250.2" y="250.9" width="13.5" height="13.5" fill="none" stroke="#f4f4f4" stroke-width="1.7"/><rect x="1203.2" y="90.2" width="13.5" height="13.5" fill="none" stroke="#f4f4f4" stroke-width="1.7"/><rect x="1244.2" y="95.2" width="13.5" height="13.5" fill="none" stroke="#f4f4f4" stroke-width="1.7"/><rect x="1178.5" y="122.1" width="13.5" height="13.5" fill="none" stroke="#f4f4f4" stroke-width="1.7"/><rect x="1178.0" y="127.1" width="13.5" height="13.5" fill="none" stroke="#f4f4f4" stroke-width="1.7"/><rect x="1191.5" y="115.0" width="13.5" height="13.5" fill="none" stroke="#f4f4f4" stroke-width="1.7"/><rect x="1200.0" y="111.5" width="13.5" height="13.5" fill="none" stroke="#f4f4f4" stroke-width="1.7"/><rect x="1208.5" y="100.2" width="13.5" height="13.5" fill="none" stroke="#f4f4f4" stroke-width="1.7"/><rect x="1220.5" y="100.8" width="13.5" height="13.5" fill="none" stroke="#f4f4f4" stroke-width="1.7"/><rect x="1224.8" y="109.2" width="13.5" height="13.5" fill="none" stroke="#f4f4f4" stroke-width="1.7"/><rect x="1219.8" y="115.0" width="13.5" height="13.5" fill="none" stroke="#f4f4f4" stroke-width="1.7"/><rect x="1205.7" y="117.8" width="13.5" height="13.5" fill="none" stroke="#f4f4f4" stroke-width="1.7"/><rect x="1120.8" y="383.6" width="13.5" height="13.5" fill="none" stroke="#f4f4f4" stroke-width="1.7"/><circle cx="1079.5" cy="81.8" r="4.6" fill="#30e030" stroke="#111" stroke-width="1.3"/><circle cx="1160.2" cy="88.2" r="4.6" fill="#f4e820" stroke="#111" stroke-width="1.3"/><circle cx="1140.5" cy="94.2" r="4.6" fill="#90a048" stroke="#111" stroke-width="1.3"/><circle cx="1100.5" cy="102.5" r="4.6" fill="#4e8a50" stroke="#111" stroke-width="1.3"/><circle cx="1186.2" cy="91.2" r="4.6" fill="#e0b838" stroke="#111" stroke-width="1.3"/><circle cx="1136.2" cy="113.2" r="4.6" fill="#5a6842" stroke="#111" stroke-width="1.3"/><circle cx="1216.2" cy="97.0" r="4.6" fill="#dca040" stroke="#111" stroke-width="1.3"/><circle cx="1262.0" cy="102.5" r="4.6" fill="#a06a40" stroke="#111" stroke-width="1.3"/><circle cx="1414.2" cy="108.2" r="4.6" fill="#f01818" stroke="#111" stroke-width="1.3"/><circle cx="1342.5" cy="126.2" r="4.6" fill="#a04040" stroke="#111" stroke-width="1.3"/><circle cx="1276.2" cy="139.2" r="4.6" fill="#c06070" stroke="#111" stroke-width="1.3"/><circle cx="1104.2" cy="145.0" r="4.6" fill="#68a898" stroke="#111" stroke-width="1.3"/><circle cx="1086.5" cy="162.0" r="4.6" fill="#40e8f8" stroke="#111" stroke-width="1.3"/><circle cx="1090.5" cy="190.0" r="4.6" fill="#2088a0" stroke="#111" stroke-width="1.3"/><circle cx="1123.2" cy="187.5" r="4.6" fill="#5a78a8" stroke="#111" stroke-width="1.3"/><circle cx="1144.5" cy="191.2" r="4.6" fill="#8a88b8" stroke="#111" stroke-width="1.3"/><circle cx="1241.2" cy="182.5" r="4.6" fill="#b85a98" stroke="#111" stroke-width="1.3"/><circle cx="1179.2" cy="210.0" r="4.6" fill="#5c4478" stroke="#111" stroke-width="1.3"/><circle cx="1122.5" cy="237.0" r="4.6" fill="#5262a0" stroke="#111" stroke-width="1.3"/><circle cx="1119.1" cy="285.5" r="4.6" fill="#44508a" stroke="#111" stroke-width="1.3"/><circle cx="1252.7" cy="252.4" r="4.6" fill="#e040e0" stroke="#111" stroke-width="1.3"/><circle cx="1260.5" cy="100.5" r="4.6" fill="#b07848" stroke="#111" stroke-width="1.3"/><circle cx="1262.2" cy="102.3" r="4.6" fill="#9a6438" stroke="#111" stroke-width="1.3"/><circle cx="1227.2" cy="108.0" r="4.6" fill="#7a5038" stroke="#111" stroke-width="1.3"/><circle cx="1238.2" cy="107.3" r="4.6" fill="#7a5038" stroke="#111" stroke-width="1.3"/><circle cx="1247.4" cy="111.1" r="4.6" fill="#6a4430" stroke="#111" stroke-width="1.3"/><circle cx="1207.8" cy="114.0" r="4.6" fill="#c89070" stroke="#111" stroke-width="1.3"/><circle cx="1223.4" cy="116.1" r="4.6" fill="#d09878" stroke="#111" stroke-width="1.3"/><circle cx="1230.1" cy="115.7" r="4.6" fill="#d09878" stroke="#111" stroke-width="1.3"/><circle cx="1202.2" cy="126.7" r="4.6" fill="#8a6048" stroke="#111" stroke-width="1.3"/><circle cx="1187.3" cy="124.9" r="4.6" fill="#f8c8a8" stroke="#111" stroke-width="1.3"/><circle cx="1201.8" cy="123.2" r="4.6" fill="#c89878" stroke="#111" stroke-width="1.3"/><circle cx="1206.4" cy="121.4" r="4.6" fill="#d0a080" stroke="#111" stroke-width="1.3"/><circle cx="1216.3" cy="121.4" r="4.6" fill="#d89878" stroke="#111" stroke-width="1.3"/><circle cx="1229.4" cy="121.4" r="4.6" fill="#f0a888" stroke="#111" stroke-width="1.3"/><circle cx="1187.3" cy="134.5" r="4.6" fill="#a87858" stroke="#111" stroke-width="1.3"/><circle cx="1185.9" cy="132.7" r="4.6" fill="#f4c0a8" stroke="#111" stroke-width="1.3"/><circle cx="1110.7" cy="379.5" r="3.8" fill="#2838d8" stroke="#111" stroke-width="1.3"/><rect x="1142.5" y="145.5" width="13" height="13" fill="none" stroke="#000" stroke-width="3"/><rect x="1141" y="144" width="16" height="16" fill="none" stroke="#f4f4f4" stroke-width="0.8"/><circle cx="1150.0" cy="151.2" r="4.6" fill="#989898" stroke="#111" stroke-width="1.3"/><circle cx="1146.5" cy="168.25" r="4.8" fill="#000"/></svg>
<div style="left:1359.50px;top:350.50px;width:188.00px;height:123.00px;border:2px solid #7a7a7a;box-sizing:border-box;background:linear-gradient(160deg,#ff9038,#ff6a30 55%,#f84030);"></div>
<svg style="left:0;top:0" width="1560" height="849"><defs><clipPath id="ins"><rect x="1361.5" y="352.5" width="184" height="119"/></clipPath></defs><g clip-path="url(#ins)"><circle cx="1361.6" cy="438.4" r="4.6" fill="#c88868" stroke="#111" stroke-width="1.3"/><rect x="1483.3" y="368.2" width="12.5" height="12.5" fill="none" stroke="#f4f4f4" stroke-width="1.6"/><rect x="1530.0" y="369.6" width="12.5" height="12.5" fill="none" stroke="#f4f4f4" stroke-width="1.6"/><rect x="1386.0" y="387.1" width="12.5" height="12.5" fill="none" stroke="#f4f4f4" stroke-width="1.6"/><rect x="1446.2" y="404.9" width="12.5" height="12.5" fill="none" stroke="#f4f4f4" stroke-width="1.6"/><rect x="1529.0" y="403.1" width="12.5" height="12.5" fill="none" stroke="#f4f4f4" stroke-width="1.6"/><rect x="1464.5" y="417.4" width="12.5" height="12.5" fill="none" stroke="#f4f4f4" stroke-width="1.6"/><rect x="1364.0" y="417.9" width="12.5" height="12.5" fill="none" stroke="#f4f4f4" stroke-width="1.6"/><rect x="1371.5" y="425.9" width="12.5" height="12.5" fill="none" stroke="#f4f4f4" stroke-width="1.6"/><rect x="1379.0" y="436.8" width="12.5" height="12.5" fill="none" stroke="#f4f4f4" stroke-width="1.6"/><rect x="1450.5" y="440.6" width="12.5" height="12.5" fill="none" stroke="#f4f4f4" stroke-width="1.6"/><circle cx="1539.2" cy="377.5" r="4.1" fill="#8a5a38" stroke="#111" stroke-width="1.3"/><circle cx="1413.4" cy="396.3" r="4.1" fill="#d09070" stroke="#111" stroke-width="1.3"/><circle cx="1475.1" cy="414.5" r="4.1" fill="#c88868" stroke="#111" stroke-width="1.3"/><circle cx="1495.2" cy="426.2" r="4.1" fill="#d09070" stroke="#111" stroke-width="1.3"/><circle cx="1374.6" cy="426.2" r="4.1" fill="#c89070" stroke="#111" stroke-width="1.3"/><circle cx="1382.6" cy="429.6" r="4.1" fill="#f0b898" stroke="#111" stroke-width="1.3"/><circle cx="1399.9" cy="431.3" r="4.1" fill="#c88868" stroke="#111" stroke-width="1.3"/><circle cx="1409.2" cy="443.0" r="4.1" fill="#d89878" stroke="#111" stroke-width="1.3"/><circle cx="1473.5" cy="449.3" r="4.1" fill="#f0b090" stroke="#111" stroke-width="1.3"/></g></svg>
<div style="left:1313.50px;top:482.50px;width:235.00px;height:25.00px;background:#2e2e2e;"></div>
<span style="left:1313.80px;top:485.77px;font-size:20px;line-height:20px;color:#f2f2f2;transform:scaleX(0.9251);transform-origin:0 0;">RGB Triplet: 217, 140, 94</span>
<div style="left:298.00px;top:559.00px;width:1262.00px;height:213.00px;background:#0c0c0c;"></div>
<div style="left:300.00px;top:560.50px;width:1258.00px;height:11.20px;background:#303030;"></div>
<div style="left:300.00px;top:571.70px;width:1258.00px;height:12.00px;background:#171717;"></div>
<div style="left:300.00px;top:583.60px;width:1258.00px;height:21.85px;background:#3d3d3d;"></div>
<div style="left:300.00px;top:605.35px;width:1258.00px;height:21.85px;background:#7b7b7b;"></div>
<div style="left:300.00px;top:627.10px;width:1258.00px;height:21.85px;background:#3d3d3d;"></div>
<div style="left:300.00px;top:648.85px;width:1258.00px;height:21.85px;background:#7b7b7b;"></div>
<div style="left:300.00px;top:670.60px;width:1258.00px;height:21.85px;background:#3d3d3d;"></div>
<div style="left:300.00px;top:692.35px;width:1258.00px;height:21.85px;background:#7b7b7b;"></div>
<div style="left:300.00px;top:714.10px;width:1258.00px;height:21.85px;background:#3d3d3d;"></div>
<div style="left:300.00px;top:735.85px;width:1258.00px;height:21.85px;background:#7b7b7b;"></div>
<div style="left:0;top:0;width:1558px;height:758px;overflow:hidden;">
<span style="left:313.30px;top:587.63px;font-size:14.5px;line-height:14.5px;color:#f2f2f2;font-weight:bold;transform:scaleX(1.1590);transform-origin:0 0;">x: CIE31</span>
<span style="left:313.30px;top:609.38px;font-size:14.5px;line-height:14.5px;color:#f2f2f2;font-weight:bold;transform:scaleX(1.1669);transform-origin:0 0;">y: CIE31</span>
<span style="left:313.30px;top:631.13px;font-size:14.5px;line-height:14.5px;color:#f2f2f2;font-weight:bold;transform:scaleX(1.0889);transform-origin:0 0;">Y</span>
<span style="left:313.30px;top:652.88px;font-size:14.5px;line-height:14.5px;color:#f2f2f2;font-weight:bold;transform:scaleX(1.2066);transform-origin:0 0;">Target x:CIE31</span>
<span style="left:313.30px;top:674.63px;font-size:14.5px;line-height:14.5px;color:#f2f2f2;font-weight:bold;transform:scaleX(1.2017);transform-origin:0 0;">Target y:CIE31</span>
<span style="left:313.30px;top:696.38px;font-size:14.5px;line-height:14.5px;color:#f2f2f2;font-weight:bold;transform:scaleX(1.2347);transform-origin:0 0;">Target Y</span>
<span style="left:313.30px;top:718.13px;font-size:14.5px;line-height:14.5px;color:#f2f2f2;font-weight:bold;transform:scaleX(1.2366);transform-origin:0 0;">ΔE 2000</span>
<span style="left:313.30px;top:739.88px;font-size:14.5px;line-height:14.5px;color:#f2f2f2;font-weight:bold;transform:scaleX(1.1887);transform-origin:0 0;">ΔE ITP</span>
<span style="left:455.00px;top:588.05px;font-size:14px;line-height:14px;color:#f0f0f0;transform:scaleX(1.2372);transform-origin:0 0;">0,3132</span>
<span style="left:537.50px;top:588.05px;font-size:14px;line-height:14px;color:#f0f0f0;transform:scaleX(1.2372);transform-origin:0 0;">0,3127</span>
<span style="left:620.00px;top:588.05px;font-size:14px;line-height:14px;color:#f0f0f0;transform:scaleX(1.2372);transform-origin:0 0;">0,3133</span>
<span style="left:703.00px;top:588.05px;font-size:14px;line-height:14px;color:#f0f0f0;transform:scaleX(1.2372);transform-origin:0 0;">0,3130</span>
<span style="left:785.50px;top:588.05px;font-size:14px;line-height:14px;color:#f0f0f0;transform:scaleX(1.2372);transform-origin:0 0;">0,3128</span>
<span style="left:868.00px;top:588.05px;font-size:14px;line-height:14px;color:#f0f0f0;transform:scaleX(1.2372);transform-origin:0 0;">0,2902</span>
<span style="left:940.75px;top:588.05px;font-size:14px;line-height:14px;color:#f0f0f0;transform:scaleX(1.2372);transform-origin:0 0;">0,4113</span>
<span style="left:1020.00px;top:588.05px;font-size:14px;line-height:14px;color:#f0f0f0;transform:scaleX(1.2372);transform-origin:0 0;">0,3824</span>
<span style="left:1102.50px;top:588.05px;font-size:14px;line-height:14px;color:#f0f0f0;transform:scaleX(1.2372);transform-origin:0 0;">0,2458</span>
<span style="left:1175.00px;top:588.05px;font-size:14px;line-height:14px;color:#f0f0f0;transform:scaleX(1.2372);transform-origin:0 0;">0,3442</span>
<span style="left:1248.00px;top:588.05px;font-size:14px;line-height:14px;color:#f0f0f0;transform:scaleX(1.2372);transform-origin:0 0;">0,2670</span>
<span style="left:1345.00px;top:588.05px;font-size:14px;line-height:14px;color:#f0f0f0;transform:scaleX(1.2372);transform-origin:0 0;">0,2605</span>
<span style="left:1449.00px;top:588.05px;font-size:14px;line-height:14px;color:#f0f0f0;transform:scaleX(1.2372);transform-origin:0 0;">0,5238</span>
<span style="left:1531.30px;top:588.05px;font-size:14px;line-height:14px;color:#f0f0f0;transform:scaleX(1.2372);transform-origin:0 0;">0,2024</span>
<span style="left:455.00px;top:609.80px;font-size:14px;line-height:14px;color:#f0f0f0;transform:scaleX(1.2372);transform-origin:0 0;">0,3297</span>
<span style="left:537.50px;top:609.80px;font-size:14px;line-height:14px;color:#f0f0f0;transform:scaleX(1.2372);transform-origin:0 0;">0,3291</span>
<span style="left:620.00px;top:609.80px;font-size:14px;line-height:14px;color:#f0f0f0;transform:scaleX(1.2372);transform-origin:0 0;">0,3290</span>
<span style="left:703.00px;top:609.80px;font-size:14px;line-height:14px;color:#f0f0f0;transform:scaleX(1.2372);transform-origin:0 0;">0,3294</span>
<span style="left:785.50px;top:609.80px;font-size:14px;line-height:14px;color:#f0f0f0;transform:scaleX(1.2372);transform-origin:0 0;">0,3284</span>
<span style="left:868.00px;top:609.80px;font-size:14px;line-height:14px;color:#f0f0f0;transform:scaleX(1.2372);transform-origin:0 0;">0,2958</span>
<span style="left:940.75px;top:609.80px;font-size:14px;line-height:14px;color:#f0f0f0;transform:scaleX(1.2372);transform-origin:0 0;">0,3662</span>
<span style="left:1020.00px;top:609.80px;font-size:14px;line-height:14px;color:#f0f0f0;transform:scaleX(1.2372);transform-origin:0 0;">0,3547</span>
<span style="left:1102.50px;top:609.80px;font-size:14px;line-height:14px;color:#f0f0f0;transform:scaleX(1.2372);transform-origin:0 0;">0,2673</span>
<span style="left:1175.00px;top:609.80px;font-size:14px;line-height:14px;color:#f0f0f0;transform:scaleX(1.2372);transform-origin:0 0;">0,4291</span>
<span style="left:1248.00px;top:609.80px;font-size:14px;line-height:14px;color:#f0f0f0;transform:scaleX(1.2372);transform-origin:0 0;">0,2562</span>
<span style="left:1345.00px;top:609.80px;font-size:14px;line-height:14px;color:#f0f0f0;transform:scaleX(1.2372);transform-origin:0 0;">0,3613</span>
<span style="left:1449.00px;top:609.80px;font-size:14px;line-height:14px;color:#f0f0f0;transform:scaleX(1.2372);transform-origin:0 0;">0,4044</span>
<span style="left:1531.30px;top:609.80px;font-size:14px;line-height:14px;color:#f0f0f0;transform:scaleX(1.2372);transform-origin:0 0;">0,1939</span>
<span style="left:455.00px;top:631.55px;font-size:14px;line-height:14px;color:#f0f0f0;transform:scaleX(1.2372);transform-origin:0 0;">392,4483</span>
<span style="left:537.50px;top:631.55px;font-size:14px;line-height:14px;color:#f0f0f0;transform:scaleX(1.2372);transform-origin:0 0;">316,0191</span>
<span style="left:620.00px;top:631.55px;font-size:14px;line-height:14px;color:#f0f0f0;transform:scaleX(1.2372);transform-origin:0 0;">257,1233</span>
<span style="left:703.00px;top:631.55px;font-size:14px;line-height:14px;color:#f0f0f0;transform:scaleX(1.2372);transform-origin:0 0;">198,8037</span>
<span style="left:785.50px;top:631.55px;font-size:14px;line-height:14px;color:#f0f0f0;transform:scaleX(1.2372);transform-origin:0 0;">137,9975</span>
<span style="left:868.00px;top:631.55px;font-size:14px;line-height:14px;color:#f0f0f0;transform:scaleX(1.2372);transform-origin:0 0;">0,4340</span>
<span style="left:940.75px;top:631.55px;font-size:14px;line-height:14px;color:#f0f0f0;transform:scaleX(1.2372);transform-origin:0 0;">39,5731</span>
<span style="left:1020.00px;top:631.55px;font-size:14px;line-height:14px;color:#f0f0f0;transform:scaleX(1.2372);transform-origin:0 0;">141,3193</span>
<span style="left:1102.50px;top:631.55px;font-size:14px;line-height:14px;color:#f0f0f0;transform:scaleX(1.2372);transform-origin:0 0;">75,8226</span>
<span style="left:1175.00px;top:631.55px;font-size:14px;line-height:14px;color:#f0f0f0;transform:scaleX(1.2372);transform-origin:0 0;">51,3232</span>
<span style="left:1248.00px;top:631.55px;font-size:14px;line-height:14px;color:#f0f0f0;transform:scaleX(1.2372);transform-origin:0 0;">95,4127</span>
<span style="left:1345.00px;top:631.55px;font-size:14px;line-height:14px;color:#f0f0f0;transform:scaleX(1.2372);transform-origin:0 0;">168,8230</span>
<span style="left:1449.00px;top:631.55px;font-size:14px;line-height:14px;color:#f0f0f0;transform:scaleX(1.2372);transform-origin:0 0;">113,6378</span>
<span style="left:1531.30px;top:631.55px;font-size:14px;line-height:14px;color:#f0f0f0;transform:scaleX(1.2372);transform-origin:0 0;">47,6312</span>
<span style="left:455.00px;top:653.30px;font-size:14px;line-height:14px;color:#f0f0f0;transform:scaleX(1.2372);transform-origin:0 0;">0,3127</span>
<span style="left:537.50px;top:653.30px;font-size:14px;line-height:14px;color:#f0f0f0;transform:scaleX(1.2372);transform-origin:0 0;">0,3127</span>
<span style="left:620.00px;top:653.30px;font-size:14px;line-height:14px;color:#f0f0f0;transform:scaleX(1.2372);transform-origin:0 0;">0,3127</span>
<span style="left:703.00px;top:653.30px;font-size:14px;line-height:14px;color:#f0f0f0;transform:scaleX(1.2372);transform-origin:0 0;">0,3127</span>
<span style="left:785.50px;top:653.30px;font-size:14px;line-height:14px;color:#f0f0f0;transform:scaleX(1.2372);transform-origin:0 0;">0,3127</span>
<span style="left:868.00px;top:653.30px;font-size:14px;line-height:14px;color:#f0f0f0;transform:scaleX(1.2372);transform-origin:0 0;">0,3127</span>
<span style="left:940.75px;top:653.30px;font-size:14px;line-height:14px;color:#f0f0f0;transform:scaleX(1.2372);transform-origin:0 0;">0,4003</span>
<span style="left:1020.00px;top:653.30px;font-size:14px;line-height:14px;color:#f0f0f0;transform:scaleX(1.2372);transform-origin:0 0;">0,3795</span>
<span style="left:1102.50px;top:653.30px;font-size:14px;line-height:14px;color:#f0f0f0;transform:scaleX(1.2372);transform-origin:0 0;">0,2496</span>
<span style="left:1175.00px;top:653.30px;font-size:14px;line-height:14px;color:#f0f0f0;transform:scaleX(1.2372);transform-origin:0 0;">0,3395</span>
<span style="left:1248.00px;top:653.30px;font-size:14px;line-height:14px;color:#f0f0f0;transform:scaleX(1.2372);transform-origin:0 0;">0,2681</span>
<span style="left:1345.00px;top:653.30px;font-size:14px;line-height:14px;color:#f0f0f0;transform:scaleX(1.2372);transform-origin:0 0;">0,2626</span>
<span style="left:1449.00px;top:653.30px;font-size:14px;line-height:14px;color:#f0f0f0;transform:scaleX(1.2372);transform-origin:0 0;">0,5122</span>
<span style="left:1531.30px;top:653.30px;font-size:14px;line-height:14px;color:#f0f0f0;transform:scaleX(1.2372);transform-origin:0 0;">0,2127</span>
<span style="left:455.00px;top:675.05px;font-size:14px;line-height:14px;color:#f0f0f0;transform:scaleX(1.2372);transform-origin:0 0;">0,3290</span>
<span style="left:537.50px;top:675.05px;font-size:14px;line-height:14px;color:#f0f0f0;transform:scaleX(1.2372);transform-origin:0 0;">0,3290</span>
<span style="left:620.00px;top:675.05px;font-size:14px;line-height:14px;color:#f0f0f0;transform:scaleX(1.2372);transform-origin:0 0;">0,3290</span>
<span style="left:703.00px;top:675.05px;font-size:14px;line-height:14px;color:#f0f0f0;transform:scaleX(1.2372);transform-origin:0 0;">0,3290</span>
<span style="left:785.50px;top:675.05px;font-size:14px;line-height:14px;color:#f0f0f0;transform:scaleX(1.2372);transform-origin:0 0;">0,3290</span>
<span style="left:868.00px;top:675.05px;font-size:14px;line-height:14px;color:#f0f0f0;transform:scaleX(1.2372);transform-origin:0 0;">0,3290</span>
<span style="left:940.75px;top:675.05px;font-size:14px;line-height:14px;color:#f0f0f0;transform:scaleX(1.2372);transform-origin:0 0;">0,3642</span>
<span style="left:1020.00px;top:675.05px;font-size:14px;line-height:14px;color:#f0f0f0;transform:scaleX(1.2372);transform-origin:0 0;">0,3562</span>
<span style="left:1102.50px;top:675.05px;font-size:14px;line-height:14px;color:#f0f0f0;transform:scaleX(1.2372);transform-origin:0 0;">0,2656</span>
<span style="left:1175.00px;top:675.05px;font-size:14px;line-height:14px;color:#f0f0f0;transform:scaleX(1.2372);transform-origin:0 0;">0,4271</span>
<span style="left:1248.00px;top:675.05px;font-size:14px;line-height:14px;color:#f0f0f0;transform:scaleX(1.2372);transform-origin:0 0;">0,2525</span>
<span style="left:1345.00px;top:675.05px;font-size:14px;line-height:14px;color:#f0f0f0;transform:scaleX(1.2372);transform-origin:0 0;">0,3616</span>
<span style="left:1449.00px;top:675.05px;font-size:14px;line-height:14px;color:#f0f0f0;transform:scaleX(1.2372);transform-origin:0 0;">0,4063</span>
<span style="left:1531.30px;top:675.05px;font-size:14px;line-height:14px;color:#f0f0f0;transform:scaleX(1.2372);transform-origin:0 0;">0,1947</span>
<span style="left:455.00px;top:696.80px;font-size:14px;line-height:14px;color:#f0f0f0;transform:scaleX(1.2372);transform-origin:0 0;">392,4483</span>
<span style="left:537.50px;top:696.80px;font-size:14px;line-height:14px;color:#f0f0f0;transform:scaleX(1.2372);transform-origin:0 0;">310,5435</span>
<span style="left:620.00px;top:696.80px;font-size:14px;line-height:14px;color:#f0f0f0;transform:scaleX(1.2372);transform-origin:0 0;">250,2238</span>
<span style="left:703.00px;top:696.80px;font-size:14px;line-height:14px;color:#f0f0f0;transform:scaleX(1.2372);transform-origin:0 0;">192,7003</span>
<span style="left:785.50px;top:696.80px;font-size:14px;line-height:14px;color:#f0f0f0;transform:scaleX(1.2372);transform-origin:0 0;">134,1837</span>
<span style="left:868.00px;top:696.80px;font-size:14px;line-height:14px;color:#f0f0f0;transform:scaleX(1.2372);transform-origin:0 0;">0,0000</span>
<span style="left:940.75px;top:696.80px;font-size:14px;line-height:14px;color:#f0f0f0;transform:scaleX(1.2372);transform-origin:0 0;">39,5325</span>
<span style="left:1020.00px;top:696.80px;font-size:14px;line-height:14px;color:#f0f0f0;transform:scaleX(1.2372);transform-origin:0 0;">136,9455</span>
<span style="left:1102.50px;top:696.80px;font-size:14px;line-height:14px;color:#f0f0f0;transform:scaleX(1.2372);transform-origin:0 0;">73,3815</span>
<span style="left:1175.00px;top:696.80px;font-size:14px;line-height:14px;color:#f0f0f0;transform:scaleX(1.2372);transform-origin:0 0;">51,1456</span>
<span style="left:1248.00px;top:696.80px;font-size:14px;line-height:14px;color:#f0f0f0;transform:scaleX(1.2372);transform-origin:0 0;">91,5130</span>
<span style="left:1345.00px;top:696.80px;font-size:14px;line-height:14px;color:#f0f0f0;transform:scaleX(1.2372);transform-origin:0 0;">164,3299</span>
<span style="left:1449.00px;top:696.80px;font-size:14px;line-height:14px;color:#f0f0f0;transform:scaleX(1.2372);transform-origin:0 0;">111,2505</span>
<span style="left:1531.30px;top:696.80px;font-size:14px;line-height:14px;color:#f0f0f0;transform:scaleX(1.2372);transform-origin:0 0;">46,1296</span>
<span style="left:455.00px;top:718.55px;font-size:14px;line-height:14px;color:#f0f0f0;transform:scaleX(1.2372);transform-origin:0 0;">0,3587</span>
<span style="left:537.50px;top:718.55px;font-size:14px;line-height:14px;color:#f0f0f0;transform:scaleX(1.2372);transform-origin:0 0;">0,3950</span>
<span style="left:620.00px;top:718.55px;font-size:14px;line-height:14px;color:#f0f0f0;transform:scaleX(1.2372);transform-origin:0 0;">0,7599</span>
<span style="left:703.00px;top:718.55px;font-size:14px;line-height:14px;color:#f0f0f0;transform:scaleX(1.2372);transform-origin:0 0;">0,7124</span>
<span style="left:785.50px;top:718.55px;font-size:14px;line-height:14px;color:#f0f0f0;transform:scaleX(1.2372);transform-origin:0 0;">0,7288</span>
<span style="left:868.00px;top:718.55px;font-size:14px;line-height:14px;color:#f0f0f0;transform:scaleX(1.2372);transform-origin:0 0;">0,7790</span>
<span style="left:940.75px;top:718.55px;font-size:14px;line-height:14px;color:#f0f0f0;transform:scaleX(1.2372);transform-origin:0 0;">1,4301</span>
<span style="left:1020.00px;top:718.55px;font-size:14px;line-height:14px;color:#f0f0f0;transform:scaleX(1.2372);transform-origin:0 0;">1,3910</span>
<span style="left:1102.50px;top:718.55px;font-size:14px;line-height:14px;color:#f0f0f0;transform:scaleX(1.2372);transform-origin:0 0;">2,2016</span>
<span style="left:1175.00px;top:718.55px;font-size:14px;line-height:14px;color:#f0f0f0;transform:scaleX(1.2372);transform-origin:0 0;">0,8161</span>
<span style="left:1248.00px;top:718.55px;font-size:14px;line-height:14px;color:#f0f0f0;transform:scaleX(1.2372);transform-origin:0 0;">1,5613</span>
<span style="left:1345.00px;top:718.55px;font-size:14px;line-height:14px;color:#f0f0f0;transform:scaleX(1.2372);transform-origin:0 0;">0,7929</span>
<span style="left:1449.00px;top:718.55px;font-size:14px;line-height:14px;color:#f0f0f0;transform:scaleX(1.2372);transform-origin:0 0;">1,5048</span>
<span style="left:1531.30px;top:718.55px;font-size:14px;line-height:14px;color:#f0f0f0;transform:scaleX(1.2372);transform-origin:0 0;">2,8912</span>
<span style="left:455.00px;top:740.30px;font-size:14px;line-height:14px;color:#f0f0f0;transform:scaleX(1.2372);transform-origin:0 0;">0,3113</span>
<span style="left:537.50px;top:740.30px;font-size:14px;line-height:14px;color:#f0f0f0;transform:scaleX(1.2372);transform-origin:0 0;">1,3373</span>
<span style="left:620.00px;top:740.30px;font-size:14px;line-height:14px;color:#f0f0f0;transform:scaleX(1.2372);transform-origin:0 0;">2,1233</span>
<span style="left:703.00px;top:740.30px;font-size:14px;line-height:14px;color:#f0f0f0;transform:scaleX(1.2372);transform-origin:0 0;">2,3440</span>
<span style="left:785.50px;top:740.30px;font-size:14px;line-height:14px;color:#f0f0f0;transform:scaleX(1.2372);transform-origin:0 0;">2,1026</span>
<span style="left:868.00px;top:740.30px;font-size:14px;line-height:14px;color:#f0f0f0;transform:scaleX(1.2372);transform-origin:0 0;">80,7699</span>
<span style="left:940.75px;top:740.30px;font-size:14px;line-height:14px;color:#f0f0f0;transform:scaleX(1.2372);transform-origin:0 0;">5,7375</span>
<span style="left:1020.00px;top:740.30px;font-size:14px;line-height:14px;color:#f0f0f0;transform:scaleX(1.2372);transform-origin:0 0;">3,3347</span>
<span style="left:1102.50px;top:740.30px;font-size:14px;line-height:14px;color:#f0f0f0;transform:scaleX(1.2372);transform-origin:0 0;">4,1445</span>
<span style="left:1175.00px;top:740.30px;font-size:14px;line-height:14px;color:#f0f0f0;transform:scaleX(1.2372);transform-origin:0 0;">2,3547</span>
<span style="left:1248.00px;top:740.30px;font-size:14px;line-height:14px;color:#f0f0f0;transform:scaleX(1.2372);transform-origin:0 0;">3,7918</span>
<span style="left:1345.00px;top:740.30px;font-size:14px;line-height:14px;color:#f0f0f0;transform:scaleX(1.2372);transform-origin:0 0;">2,3931</span>
<span style="left:1449.00px;top:740.30px;font-size:14px;line-height:14px;color:#f0f0f0;transform:scaleX(1.2372);transform-origin:0 0;">8,0882</span>
<span style="left:1531.30px;top:740.30px;font-size:14px;line-height:14px;color:#f0f0f0;transform:scaleX(1.2372);transform-origin:0 0;">8,2311</span>
<span style="left:469.48px;top:565.15px;font-size:14px;line-height:14px;color:#f0f0f0;transform:scaleX(1.2371);transform-origin:0 0;-webkit-text-stroke:0.45px #f0f0f0;">White</span>
<span style="left:545.50px;top:565.15px;font-size:14px;line-height:14px;color:#f0f0f0;transform:scaleX(1.1453);transform-origin:0 0;-webkit-text-stroke:0.45px #f0f0f0;">Gray 80</span>
<span style="left:628.25px;top:565.15px;font-size:14px;line-height:14px;color:#f0f0f0;transform:scaleX(1.1352);transform-origin:0 0;-webkit-text-stroke:0.45px #f0f0f0;">Gray 65</span>
<span style="left:711.27px;top:565.15px;font-size:14px;line-height:14px;color:#f0f0f0;transform:scaleX(1.1302);transform-origin:0 0;-webkit-text-stroke:0.45px #f0f0f0;">Gray 50</span>
<span style="left:793.73px;top:565.15px;font-size:14px;line-height:14px;color:#f0f0f0;transform:scaleX(1.1202);transform-origin:0 0;-webkit-text-stroke:0.45px #f0f0f0;">Gray 35</span>
<span style="left:880.75px;top:565.15px;font-size:14px;line-height:14px;color:#f0f0f0;transform:scaleX(1.1079);transform-origin:0 0;-webkit-text-stroke:0.45px #f0f0f0;">Black</span>
<span style="left:941.27px;top:565.15px;font-size:14px;line-height:14px;color:#f0f0f0;transform:scaleX(1.1246);transform-origin:0 0;-webkit-text-stroke:0.45px #f0f0f0;">Dark Skin</span>
<span style="left:1020.50px;top:565.15px;font-size:14px;line-height:14px;color:#f0f0f0;transform:scaleX(1.1357);transform-origin:0 0;-webkit-text-stroke:0.45px #f0f0f0;">Light Skin</span>
<span style="left:1103.28px;top:565.15px;font-size:14px;line-height:14px;color:#f0f0f0;transform:scaleX(1.1090);transform-origin:0 0;-webkit-text-stroke:0.45px #f0f0f0;">Blue Sky</span>
<span style="left:1180.72px;top:565.15px;font-size:14px;line-height:14px;color:#f0f0f0;transform:scaleX(1.1270);transform-origin:0 0;-webkit-text-stroke:0.45px #f0f0f0;">Foliage</span>
<span style="left:1248.00px;top:565.15px;font-size:14px;line-height:14px;color:#f0f0f0;transform:scaleX(1.1702);transform-origin:0 0;-webkit-text-stroke:0.45px #f0f0f0;">Blue Flower</span>
<span style="left:1345.03px;top:565.15px;font-size:14px;line-height:14px;color:#f0f0f0;transform:scaleX(1.1586);transform-origin:0 0;-webkit-text-stroke:0.45px #f0f0f0;">Bluish Green</span>
<span style="left:1458.75px;top:565.15px;font-size:14px;line-height:14px;color:#f0f0f0;transform:scaleX(1.1330);transform-origin:0 0;-webkit-text-stroke:0.45px #f0f0f0;">Orange</span>
<span style="left:1531.30px;top:565.15px;font-size:14px;line-height:14px;color:#f0f0f0;transform:scaleX(1.1453);transform-origin:0 0;-webkit-text-stroke:0.45px #f0f0f0;">Purplish Blue</span>
</div>
<div style="left:300.00px;top:758.00px;width:1258.00px;height:14.00px;background:#5c5c5c;"></div>
<div style="left:301.00px;top:759.00px;width:15.00px;height:12.00px;background:#767676;border-radius:2px;"></div>
<svg style="left:304px;top:760.5px" width="9" height="9"><path d="M7 0.5V8.5L2 4.5Z" fill="#3a3a3a"/></svg>
<div style="left:319.50px;top:760.00px;width:369.50px;height:10.50px;background:#474747;border-radius:5px;"></div>
<div style="left:1544.00px;top:759.00px;width:14.00px;height:12.00px;background:#767676;border-radius:2px;"></div>
<svg style="left:1547px;top:760.5px" width="9" height="9"><path d="M2 0.5V8.5L7 4.5Z" fill="#3a3a3a"/></svg>
<div style="left:0;top:0;width:1240px;height:849px;overflow:hidden;">
<div style="left:-2.00px;top:790.00px;width:50.00px;height:48.50px;background:linear-gradient(#a6a6a6,#8c8c8c 45%,#626262);border-radius:4px 4px 0 0;"></div>
<div style="left:3.50px;top:795.30px;width:39.50px;height:24.00px;background:#ffffff;border-radius:3px;box-shadow:inset 0 1px 2px rgba(0,0,0,0.45);"></div>
<span style="left:9.20px;top:823.59px;font-size:12px;line-height:12px;color:#262626;transform:scaleX(0.9000);transform-origin:0 0;-webkit-text-stroke:0.35px #262626;">White</span>
<div style="left:50.00px;top:790.00px;width:50.00px;height:48.50px;background:linear-gradient(#a6a6a6,#8c8c8c 45%,#626262);border-radius:4px 4px 0 0;"></div>
<div style="left:55.50px;top:795.30px;width:39.50px;height:24.00px;background:#e6e6e6;border-radius:3px;box-shadow:inset 0 1px 2px rgba(0,0,0,0.45);"></div>
<span style="left:55.80px;top:823.59px;font-size:12px;line-height:12px;color:#262626;transform:scaleX(0.9000);transform-origin:0 0;-webkit-text-stroke:0.35px #262626;">Gray 80</span>
<div style="left:102.00px;top:790.00px;width:50.00px;height:48.50px;background:linear-gradient(#a6a6a6,#8c8c8c 45%,#626262);border-radius:4px 4px 0 0;"></div>
<div style="left:107.50px;top:795.30px;width:39.50px;height:24.00px;background:#d2d2d2;border-radius:3px;box-shadow:inset 0 1px 2px rgba(0,0,0,0.45);"></div>
<span style="left:107.80px;top:823.59px;font-size:12px;line-height:12px;color:#262626;transform:scaleX(0.9000);transform-origin:0 0;-webkit-text-stroke:0.35px #262626;">Gray 65</span>
<div style="left:154.00px;top:790.00px;width:50.00px;height:48.50px;background:linear-gradient(#a6a6a6,#8c8c8c 45%,#626262);border-radius:4px 4px 0 0;"></div>
<div style="left:159.50px;top:795.30px;width:39.50px;height:24.00px;background:#bdbdbd;border-radius:3px;box-shadow:inset 0 1px 2px rgba(0,0,0,0.45);"></div>
<span style="left:159.80px;top:823.59px;font-size:12px;line-height:12px;color:#262626;transform:scaleX(0.9000);transform-origin:0 0;-webkit-text-stroke:0.35px #262626;">Gray 50</span>
<div style="left:206.00px;top:790.00px;width:50.00px;height:48.50px;background:linear-gradient(#a6a6a6,#8c8c8c 45%,#626262);border-radius:4px 4px 0 0;"></div>
<div style="left:211.50px;top:795.30px;width:39.50px;height:24.00px;background:#a2a2a2;border-radius:3px;box-shadow:inset 0 1px 2px rgba(0,0,0,0.45);"></div>
<span style="left:211.80px;top:823.59px;font-size:12px;line-height:12px;color:#262626;transform:scaleX(0.9000);transform-origin:0 0;-webkit-text-stroke:0.35px #262626;">Gray 35</span>
<div style="left:258.00px;top:790.00px;width:50.00px;height:48.50px;background:linear-gradient(#a6a6a6,#8c8c8c 45%,#626262);border-radius:4px 4px 0 0;"></div>
<div style="left:263.50px;top:795.30px;width:39.50px;height:24.00px;background:#000000;border-radius:3px;box-shadow:inset 0 1px 2px rgba(0,0,0,0.45);"></div>
<span style="left:269.77px;top:823.59px;font-size:12px;line-height:12px;color:#262626;transform:scaleX(0.9000);transform-origin:0 0;-webkit-text-stroke:0.35px #262626;">Black</span>
<div style="left:310.00px;top:790.00px;width:50.00px;height:48.50px;background:linear-gradient(#a6a6a6,#8c8c8c 45%,#626262);border-radius:4px 4px 0 0;"></div>
<div style="left:315.50px;top:795.30px;width:39.50px;height:24.00px;background:#775444;border-radius:3px;box-shadow:inset 0 1px 2px rgba(0,0,0,0.45);"></div>
<span style="left:311.75px;top:823.59px;font-size:12px;line-height:12px;color:#262626;transform:scaleX(0.8939);transform-origin:0 0;-webkit-text-stroke:0.35px #262626;">Dark Skin</span>
<div style="left:362.00px;top:790.00px;width:50.00px;height:48.50px;background:linear-gradient(#a6a6a6,#8c8c8c 45%,#626262);border-radius:4px 4px 0 0;"></div>
<div style="left:367.50px;top:795.30px;width:39.50px;height:24.00px;background:#c8968a;border-radius:3px;box-shadow:inset 0 1px 2px rgba(0,0,0,0.45);"></div>
<span style="left:363.75px;top:823.59px;font-size:12px;line-height:12px;color:#262626;transform:scaleX(0.8827);transform-origin:0 0;-webkit-text-stroke:0.35px #262626;">Light Skin</span>
<div style="left:414.00px;top:790.00px;width:50.00px;height:48.50px;background:linear-gradient(#a6a6a6,#8c8c8c 45%,#626262);border-radius:4px 4px 0 0;"></div>
<div style="left:419.50px;top:795.30px;width:39.50px;height:24.00px;background:#5f7ea6;border-radius:3px;box-shadow:inset 0 1px 2px rgba(0,0,0,0.45);"></div>
<span style="left:417.70px;top:823.59px;font-size:12px;line-height:12px;color:#262626;transform:scaleX(0.9000);transform-origin:0 0;-webkit-text-stroke:0.35px #262626;">Blue Sky</span>
<div style="left:466.00px;top:790.00px;width:50.00px;height:48.50px;background:linear-gradient(#a6a6a6,#8c8c8c 45%,#626262);border-radius:4px 4px 0 0;"></div>
<div style="left:471.50px;top:795.30px;width:39.50px;height:24.00px;background:#5a6e44;border-radius:3px;box-shadow:inset 0 1px 2px rgba(0,0,0,0.45);"></div>
<span style="left:473.29px;top:823.59px;font-size:12px;line-height:12px;color:#262626;transform:scaleX(0.9000);transform-origin:0 0;-webkit-text-stroke:0.35px #262626;">Foliage</span>
<div style="left:518.00px;top:790.00px;width:50.00px;height:48.50px;background:linear-gradient(#a6a6a6,#8c8c8c 45%,#626262);border-radius:4px 4px 0 0;"></div>
<div style="left:523.50px;top:795.30px;width:39.50px;height:12.00px;background:#8680b8;border-radius:3px;box-shadow:inset 0 1px 2px rgba(0,0,0,0.45);"></div>
<span style="left:532.20px;top:811.09px;font-size:12px;line-height:12px;color:#262626;transform:scaleX(0.9000);transform-origin:0 0;-webkit-text-stroke:0.35px #262626;">Blue</span>
<span style="left:526.80px;top:823.59px;font-size:12px;line-height:12px;color:#262626;transform:scaleX(0.9000);transform-origin:0 0;-webkit-text-stroke:0.35px #262626;">Flower</span>
<div style="left:570.00px;top:790.00px;width:50.00px;height:48.50px;background:linear-gradient(#a6a6a6,#8c8c8c 45%,#626262);border-radius:4px 4px 0 0;"></div>
<div style="left:575.50px;top:795.30px;width:39.50px;height:12.00px;background:#66c2ac;border-radius:3px;box-shadow:inset 0 1px 2px rgba(0,0,0,0.45);"></div>
<span style="left:580.28px;top:811.09px;font-size:12px;line-height:12px;color:#262626;transform:scaleX(0.9000);transform-origin:0 0;-webkit-text-stroke:0.35px #262626;">Bluish</span>
<span style="left:579.99px;top:823.59px;font-size:12px;line-height:12px;color:#262626;transform:scaleX(0.9000);transform-origin:0 0;-webkit-text-stroke:0.35px #262626;">Green</span>
<div style="left:622.00px;top:790.00px;width:50.00px;height:48.50px;background:linear-gradient(#a6a6a6,#8c8c8c 45%,#626262);border-radius:4px 4px 0 0;"></div>
<div style="left:627.50px;top:795.30px;width:39.50px;height:24.00px;background:#e07a2c;border-radius:3px;box-shadow:inset 0 1px 2px rgba(0,0,0,0.45);"></div>
<span style="left:628.99px;top:823.59px;font-size:12px;line-height:12px;color:#262626;transform:scaleX(0.9000);transform-origin:0 0;-webkit-text-stroke:0.35px #262626;">Orange</span>
<div style="left:674.00px;top:790.00px;width:50.00px;height:48.50px;background:linear-gradient(#a6a6a6,#8c8c8c 45%,#626262);border-radius:4px 4px 0 0;"></div>
<div style="left:679.50px;top:795.30px;width:39.50px;height:12.00px;background:#4c5cb4;border-radius:3px;box-shadow:inset 0 1px 2px rgba(0,0,0,0.45);"></div>
<span style="left:679.48px;top:811.09px;font-size:12px;line-height:12px;color:#262626;transform:scaleX(0.9000);transform-origin:0 0;-webkit-text-stroke:0.35px #262626;">Purplish</span>
<span style="left:688.20px;top:823.59px;font-size:12px;line-height:12px;color:#262626;transform:scaleX(0.9000);transform-origin:0 0;-webkit-text-stroke:0.35px #262626;">Blue</span>
<div style="left:726.00px;top:790.00px;width:50.00px;height:48.50px;background:linear-gradient(#a6a6a6,#8c8c8c 45%,#626262);border-radius:4px 4px 0 0;"></div>
<div style="left:731.50px;top:795.30px;width:39.50px;height:12.00px;background:#c85464;border-radius:3px;box-shadow:inset 0 1px 2px rgba(0,0,0,0.45);"></div>
<span style="left:728.18px;top:811.09px;font-size:12px;line-height:12px;color:#262626;transform:scaleX(0.9000);transform-origin:0 0;-webkit-text-stroke:0.35px #262626;">Moderate</span>
<span style="left:741.09px;top:823.59px;font-size:12px;line-height:12px;color:#262626;transform:scaleX(0.9000);transform-origin:0 0;-webkit-text-stroke:0.35px #262626;">Red</span>
<div style="left:778.00px;top:790.00px;width:50.00px;height:48.50px;background:linear-gradient(#a6a6a6,#8c8c8c 45%,#626262);border-radius:4px 4px 0 0;"></div>
<div style="left:783.50px;top:795.30px;width:39.50px;height:24.00px;background:#5e3c78;border-radius:3px;box-shadow:inset 0 1px 2px rgba(0,0,0,0.45);"></div>
<span style="left:787.39px;top:823.59px;font-size:12px;line-height:12px;color:#262626;transform:scaleX(0.9000);transform-origin:0 0;-webkit-text-stroke:0.35px #262626;">Purple</span>
<div style="left:830.00px;top:790.00px;width:50.00px;height:48.50px;background:linear-gradient(#a6a6a6,#8c8c8c 45%,#626262);border-radius:4px 4px 0 0;"></div>
<div style="left:835.50px;top:795.30px;width:39.50px;height:12.00px;background:#a0c040;border-radius:3px;box-shadow:inset 0 1px 2px rgba(0,0,0,0.45);"></div>
<span style="left:839.58px;top:811.09px;font-size:12px;line-height:12px;color:#262626;transform:scaleX(0.9000);transform-origin:0 0;-webkit-text-stroke:0.35px #262626;">Yellow</span>
<span style="left:839.99px;top:823.59px;font-size:12px;line-height:12px;color:#262626;transform:scaleX(0.9000);transform-origin:0 0;-webkit-text-stroke:0.35px #262626;">Green</span>
<div style="left:882.00px;top:790.00px;width:50.00px;height:48.50px;background:linear-gradient(#a6a6a6,#8c8c8c 45%,#626262);border-radius:4px 4px 0 0;"></div>
<div style="left:887.50px;top:795.30px;width:39.50px;height:12.00px;background:#e8a030;border-radius:3px;box-shadow:inset 0 1px 2px rgba(0,0,0,0.45);"></div>
<span style="left:888.99px;top:811.09px;font-size:12px;line-height:12px;color:#262626;transform:scaleX(0.9000);transform-origin:0 0;-webkit-text-stroke:0.35px #262626;">Orange</span>
<span style="left:891.58px;top:823.59px;font-size:12px;line-height:12px;color:#262626;transform:scaleX(0.9000);transform-origin:0 0;-webkit-text-stroke:0.35px #262626;">Yellow</span>
<div style="left:934.00px;top:790.00px;width:50.00px;height:48.50px;background:linear-gradient(#a6a6a6,#8c8c8c 45%,#626262);border-radius:4px 4px 0 0;"></div>
<div style="left:939.50px;top:795.30px;width:39.50px;height:24.00px;background:#343c9c;border-radius:3px;box-shadow:inset 0 1px 2px rgba(0,0,0,0.45);"></div>
<span style="left:948.20px;top:823.59px;font-size:12px;line-height:12px;color:#262626;transform:scaleX(0.9000);transform-origin:0 0;-webkit-text-stroke:0.35px #262626;">Blue</span>
<div style="left:986.00px;top:790.00px;width:50.00px;height:48.50px;background:linear-gradient(#a6a6a6,#8c8c8c 45%,#626262);border-radius:4px 4px 0 0;"></div>
<div style="left:991.50px;top:795.30px;width:39.50px;height:24.00px;background:#489848;border-radius:3px;box-shadow:inset 0 1px 2px rgba(0,0,0,0.45);"></div>
<span style="left:995.99px;top:823.59px;font-size:12px;line-height:12px;color:#262626;transform:scaleX(0.9000);transform-origin:0 0;-webkit-text-stroke:0.35px #262626;">Green</span>
<div style="left:1038.00px;top:790.00px;width:50.00px;height:48.50px;background:linear-gradient(#a6a6a6,#8c8c8c 45%,#626262);border-radius:4px 4px 0 0;"></div>
<div style="left:1043.50px;top:795.30px;width:39.50px;height:24.00px;background:#b03038;border-radius:3px;box-shadow:inset 0 1px 2px rgba(0,0,0,0.45);"></div>
<span style="left:1053.09px;top:823.59px;font-size:12px;line-height:12px;color:#262626;transform:scaleX(0.9000);transform-origin:0 0;-webkit-text-stroke:0.35px #262626;">Red</span>
<div style="left:1090.00px;top:790.00px;width:50.00px;height:48.50px;background:linear-gradient(#a6a6a6,#8c8c8c 45%,#626262);border-radius:4px 4px 0 0;"></div>
<div style="left:1095.50px;top:795.30px;width:39.50px;height:24.00px;background:#f0c820;border-radius:3px;box-shadow:inset 0 1px 2px rgba(0,0,0,0.45);"></div>
<span style="left:1099.58px;top:823.59px;font-size:12px;line-height:12px;color:#262626;transform:scaleX(0.9000);transform-origin:0 0;-webkit-text-stroke:0.35px #262626;">Yellow</span>
<div style="left:1142.00px;top:790.00px;width:50.00px;height:48.50px;background:linear-gradient(#a6a6a6,#8c8c8c 45%,#626262);border-radius:4px 4px 0 0;"></div>
<div style="left:1147.50px;top:795.30px;width:39.50px;height:24.00px;background:#c05898;border-radius:3px;box-shadow:inset 0 1px 2px rgba(0,0,0,0.45);"></div>
<span style="left:1145.97px;top:823.59px;font-size:12px;line-height:12px;color:#262626;transform:scaleX(0.9000);transform-origin:0 0;-webkit-text-stroke:0.35px #262626;">Magenta</span>
<div style="left:1194.00px;top:790.00px;width:50.00px;height:48.50px;background:linear-gradient(#a6a6a6,#8c8c8c 45%,#626262);border-radius:4px 4px 0 0;"></div>
<div style="left:1199.50px;top:795.30px;width:39.50px;height:24.00px;background:#0890b0;border-radius:3px;box-shadow:inset 0 1px 2px rgba(0,0,0,0.45);"></div>
<span style="left:1206.39px;top:823.59px;font-size:12px;line-height:12px;color:#262626;transform:scaleX(0.9000);transform-origin:0 0;-webkit-text-stroke:0.35px #262626;">Cyan</span>
</div>
<div style="left:0.00px;top:838.60px;width:1240.00px;height:10.40px;background:#626262;"></div>
<div style="left:11.00px;top:840.00px;width:616.00px;height:9.00px;background:#4a4a4a;border-radius:5px 5px 0 0;"></div>
<div style="left:0.00px;top:839.00px;width:10.00px;height:10.00px;background:#6a6a6a;"></div>
<svg style="left:1px;top:840px" width="8" height="9"><path d="M6 0.5V8.5L1.5 4.5Z" fill="#3a3a3a"/></svg>
<div style="left:1228.00px;top:839.00px;width:11.00px;height:10.00px;background:#7a7a7a;border-radius:2px;"></div>
<svg style="left:1230px;top:840px" width="8" height="9"><path d="M2 0.5V8.5L6.5 4.5Z" fill="#3a3a3a"/></svg>
<div style="left:1239.00px;top:790.00px;width:321.00px;height:59.00px;background:#333;"></div>
<div style="left:1240.00px;top:790.00px;width:48.00px;height:17.90px;background:linear-gradient(#b6b6b6,#9c9c9c 50%,#7a7a7a);border-radius:4px 4px 0 0;"></div>
<div style="left:1240.00px;top:808.70px;width:48.00px;height:40.30px;background:linear-gradient(#b6b6b6,#9c9c9c 50%,#7a7a7a);"></div>
<div style="left:1257.10px;top:791.50px;width:15.00px;height:15.00px;background:linear-gradient(#7e7e7e,#c4c4c4);border-radius:50%;"></div>
<svg style="left:1260px;top:796px" width="9" height="5"><path d="M0.8 4.6H8.2L4.5 0.3Z" fill="#333"/></svg>
<div style="left:1248.20px;top:814.00px;width:31.20px;height:31.00px;border:2.5px solid #2a2a2a;border-radius:5px;box-sizing:border-box;background:linear-gradient(#c2c2c2 55%,#a4a4a4 55%);"></div>
<div style="left:1257.20px;top:823.10px;width:13.50px;height:13.80px;background:linear-gradient(#202020 55%,#000 55%);"></div>
<div style="left:1289.00px;top:790.00px;width:46.50px;height:29.80px;background:linear-gradient(#b6b6b6,#9c9c9c 50%,#7a7a7a);border-radius:4px 0 0 0;"></div>
<div style="left:1302.25px;top:795.00px;width:20.00px;height:20.00px;background:linear-gradient(#7e7e7e,#c4c4c4);border-radius:50%;"></div>
<div style="left:1336.30px;top:790.00px;width:44.00px;height:29.80px;background:linear-gradient(#b6b6b6,#9c9c9c 50%,#7a7a7a);"></div>
<div style="left:1348.30px;top:795.00px;width:20.00px;height:20.00px;background:linear-gradient(#7e7e7e,#c4c4c4);border-radius:50%;"></div>
<div style="left:1381.20px;top:790.00px;width:44.00px;height:29.80px;background:linear-gradient(#b6b6b6,#9c9c9c 50%,#7a7a7a);"></div>
<div style="left:1393.20px;top:795.00px;width:20.00px;height:20.00px;background:linear-gradient(#7e7e7e,#c4c4c4);border-radius:50%;"></div>
<div style="left:1426.00px;top:790.00px;width:44.00px;height:29.80px;background:linear-gradient(#b6b6b6,#9c9c9c 50%,#7a7a7a);"></div>
<div style="left:1438.00px;top:795.00px;width:20.00px;height:20.00px;background:linear-gradient(#7e7e7e,#c4c4c4);border-radius:50%;"></div>
<div style="left:1470.50px;top:790.00px;width:44.70px;height:29.80px;background:linear-gradient(#3a3a3a,#2c2c2c);"></div>
<div style="left:1482.85px;top:795.00px;width:20.00px;height:20.00px;background:linear-gradient(#2a2a2a,#3c3c3c);border-radius:50%;"></div>
<div style="left:1516.00px;top:790.00px;width:44.00px;height:29.80px;background:linear-gradient(#3a3a3a,#2c2c2c);"></div>
<div style="left:1528.00px;top:795.00px;width:20.00px;height:20.00px;background:linear-gradient(#2a2a2a,#3c3c3c);border-radius:50%;"></div>
<svg style="left:1308px;top:801px" width="8" height="8"><rect width="8" height="7.8" fill="#2e2e2e"/></svg>
<svg style="left:1352px;top:797px" width="12" height="16"><path d="M1.5 1.5V14.5L11 8Z" fill="#2a2a2a"/></svg>
<svg style="left:1395px;top:798px" width="18" height="14"><path d="M4.5 1.5H1.8V12.5H4.5M13.5 1.5H16.2V12.5H13.5" fill="none" stroke="#2a2a2a" stroke-width="2"/><rect x="6.6" y="6.2" width="1.8" height="1.8" fill="#2a2a2a"/><rect x="9.6" y="6.2" width="1.8" height="1.8" fill="#2a2a2a"/></svg>
<svg style="left:1439px;top:800px" width="18" height="10"><path d="M9 5C7 2.6 4 1.3 2.6 2.8C1.3 4.2 2.2 7.6 4.8 7.6C6.4 7.6 7.8 6.3 9 5C10.2 3.7 11.6 2.4 13.2 2.4C15.8 2.4 16.7 5.8 15.4 7.2C14 8.7 11 7.4 9 5Z" fill="none" stroke="#2a2a2a" stroke-width="1.9"/></svg>
<svg style="left:1483px;top:796px" width="20" height="18"><path d="M4 8A6 6 0 0 1 15 5M16 10A6 6 0 0 1 5 13" fill="none" stroke="#262626" stroke-width="2.6"/><path d="M13 2L17 6L12 7Z M7 16L3 12L8 11Z" fill="#262626"/></svg>
<div style="left:1334.90px;top:790.00px;width:1.20px;height:30.00px;background:#2e2e2e;"></div>
<div style="left:1380.00px;top:790.00px;width:1.20px;height:30.00px;background:#2e2e2e;"></div>
<div style="left:1424.80px;top:790.00px;width:1.20px;height:30.00px;background:#2e2e2e;"></div>
<div style="left:1469.60px;top:790.00px;width:1.20px;height:30.00px;background:#2e2e2e;"></div>
<div style="left:1514.80px;top:790.00px;width:1.20px;height:30.00px;background:#2e2e2e;"></div>
<div style="left:1289.00px;top:820.90px;width:136.40px;height:28.10px;background:linear-gradient(#b6b6b6,#9c9c9c 50%,#7a7a7a);border-radius:4px 0 0 0;"></div>
<div style="left:1426.20px;top:820.90px;width:133.80px;height:28.10px;background:linear-gradient(#b6b6b6,#9c9c9c 50%,#7a7a7a);"></div>
<div style="left:1309.40px;top:825.20px;width:21.00px;height:21.00px;background:linear-gradient(#7e7e7e,#c4c4c4);border-radius:50%;"></div>
<div style="left:1522.50px;top:825.20px;width:21.00px;height:21.00px;background:linear-gradient(#7e7e7e,#c4c4c4);border-radius:50%;"></div>
<svg style="left:1311px;top:827px" width="18" height="17"><path d="M9 2L3.5 8.5L9 15M15 2L9.5 8.5L15 15" fill="none" stroke="#2a2a2a" stroke-width="2"/></svg>
<svg style="left:1524px;top:827px" width="18" height="17"><path d="M3 2L8.5 8.5L3 15M9 2L14.5 8.5L9 15" fill="none" stroke="#2a2a2a" stroke-width="2"/></svg>
<span style="left:1346.80px;top:825.08px;font-size:22px;line-height:22px;color:#2e2e2e;font-weight:bold;transform:scaleX(0.9470);transform-origin:0 0;">Back</span>
<span style="left:1453.20px;top:825.08px;font-size:22px;line-height:22px;color:#2e2e2e;font-weight:bold;transform:scaleX(1.0809);transform-origin:0 0;">Next</span>
</body></html>
